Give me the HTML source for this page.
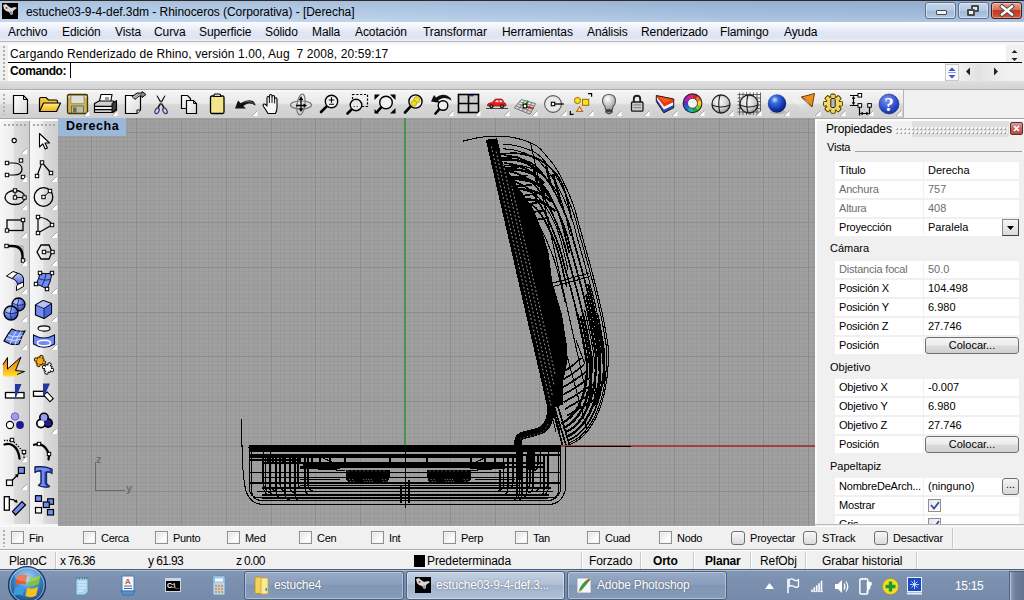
<!DOCTYPE html>
<html><head><meta charset="utf-8"><title>Rhinoceros</title>
<style>
*{box-sizing:border-box;margin:0;padding:0}
html,body{width:1024px;height:600px;overflow:hidden;background:#f0f0f0;font-family:"Liberation Sans","DejaVu Sans",sans-serif;font-size:12px;color:#000}
.abs{position:absolute}
svg{position:absolute;overflow:visible}
#titlebar{left:0;top:0;width:1024px;height:22px;background:linear-gradient(180deg,rgba(0,0,0,.05) 0,rgba(255,255,255,0) 45%,rgba(255,255,255,.2) 100%),linear-gradient(90deg,#b4cce8 0,#b1c9e6 35%,#9fbadb 70%,#99b4d6 100%);border-top:1px solid #2b2b2b}
#title{left:26px;top:5px;font-size:12px;color:#000;white-space:nowrap;letter-spacing:-0.05px}
#menubar{left:0;top:22px;width:1024px;height:20px;background:linear-gradient(#fbfcfe 0,#eef1f9 30%,#e1e6f5 55%,#dfe4f3 85%,#eff1f8 100%);border-bottom:1px solid #b8b8b8}
#menubar span{position:absolute;top:3px;font-size:12px;white-space:nowrap;letter-spacing:-.1px}
#cmdarea{left:0;top:43px;width:1024px;height:47px;background:#f0f0f0}
#hist{left:8px;top:45px;width:998px;height:17px;background:#fff}
#hist span{position:absolute;left:2px;top:2px;font-size:12px;white-space:nowrap;letter-spacing:0.1px}
#cmdline{left:8px;top:62px;width:1014px;height:1px;background:#000}
#cmdbox{left:8px;top:63px;width:937px;height:18px;background:#fff}
#cmdbox b{position:absolute;left:2px;top:1px;font-size:12px;letter-spacing:-0.4px}
#caret{left:70px;top:63px;width:1px;height:15px;background:#000}
.grip{background-image:radial-gradient(circle at 1px 1px,#b2b2b2 0.9px,transparent 1.1px);background-size:4px 4px}
.hgrip{background-image:radial-gradient(circle at 1px 1px,#a8a8a8 0.9px,transparent 1.1px);background-size:4px 4px}
#toolbar{left:0;top:90px;width:904px;height:28px;background:linear-gradient(#fdfdfd 0,#f3f3f3 8%,#e9e9e9 47%,#d8d8d8 53%,#cfcfcf 100%);border-right:1px solid #b5b5b5}
#toolbar svg{top:0;width:28px;height:28px}
#lefttb{left:0;top:118px;width:58px;height:408px;background:#f0f0f0}
.lcol{position:absolute;top:0;height:407px;background:linear-gradient(90deg,#f7f7f7 0,#ececec 46%,#dcdcdc 50%,#cfcfcf 100%)}
#lefttb svg{width:28px;height:28px}
#viewport{left:58px;top:118px;width:757px;height:408px;background:#a0a0a0;overflow:hidden}
#props{left:815px;top:118px;width:209px;height:408px;background:#f0f0f0;overflow:hidden;font-size:11px}
#osnap{left:0;top:526px;width:1024px;height:24px;background:#f0f0f0}
#status{left:0;top:550px;width:1024px;height:20px;background:#f0f0f0}
#taskbar{left:0;top:569px;width:1024px;height:31px;background:linear-gradient(#8297b5 0,#7b90ae 40%,#768baa 100%);border-top:1px solid #515f74}
</style></head><body>
<div id="titlebar" class="abs"></div>
<svg class="abs" style="left:2px;top:3px;width:16px;height:16px" viewBox="0 0 16 16"><rect width="16" height="16" fill="#000"/><path d="M1 2 L4 1 L6 3 L9 5 L13 4 L15 5 L11 8 L11 11 L9 12 L7 9 L4 8 L2 6 Z" fill="#d8d8d8"/><path d="M7 9 L9 12 L11 11 L10 8Z" fill="#9a9a9a"/><circle cx="4.5" cy="5" r="1" fill="#e02020"/></svg>
<div id="title" class="abs">estuche03-9-4-def.3dm - Rhinoceros (Corporativa) - [Derecha]</div>
<!-- window buttons -->
<div class="abs" style="left:925px;top:2px;width:31px;height:17px;border:1px solid #5c708a;border-radius:3px;background:linear-gradient(#c3d6ec 0,#b4cae4 50%,#9fb9d6 52%,#b0c8e2 100%);box-shadow:inset 0 0 0 1px rgba(255,255,255,.45)"></div>
<div class="abs" style="left:936px;top:10px;width:11px;height:5px;border:1px solid #4a4a4a;border-radius:1px;background:#f4f4f4"></div>
<div class="abs" style="left:958px;top:2px;width:31px;height:17px;border:1px solid #5c708a;border-radius:3px;background:linear-gradient(#c3d6ec 0,#b4cae4 50%,#9fb9d6 52%,#b0c8e2 100%);box-shadow:inset 0 0 0 1px rgba(255,255,255,.45)"></div>
<div class="abs" style="left:971px;top:5px;width:8px;height:7px;border:2px solid #4a4a4a;border-radius:1px;background:#dfe8f2"></div>
<div class="abs" style="left:967px;top:9px;width:8px;height:7px;border:2px solid #4a4a4a;border-radius:1px;background:#f2f2f2"></div>
<div class="abs" style="left:991px;top:2px;width:31px;height:17px;border:1px solid #4a1a1a;border-radius:3px;background:linear-gradient(#e4a595 0,#d7705a 45%,#c2391b 50%,#cf5a3a 100%);box-shadow:inset 0 0 0 1px rgba(255,255,255,.35)"></div>
<svg class="abs" style="left:1000px;top:5px;width:14px;height:11px" viewBox="0 0 14 11"><path d="M2 1.5 L12 9.5 M12 1.5 L2 9.5" stroke="#43464c" stroke-width="4.2" stroke-linecap="square"/><path d="M2 1.5 L12 9.5 M12 1.5 L2 9.5" stroke="#fff" stroke-width="2.4" stroke-linecap="square"/></svg>
<div id="menubar" class="abs">
<span style="left:8px">Archivo</span><span style="left:62px">Edición</span><span style="left:115px">Vista</span><span style="left:154px">Curva</span><span style="left:199px">Superficie</span><span style="left:265px">Sólido</span><span style="left:312px">Malla</span><span style="left:355px">Acotación</span><span style="left:423px">Transformar</span><span style="left:502px">Herramientas</span><span style="left:587px">Análisis</span><span style="left:641px">Renderizado</span><span style="left:720px">Flamingo</span><span style="left:784px">Ayuda</span>
</div>
<div id="cmdarea" class="abs"></div>
<div class="abs" style="left:0;top:43px;width:1024px;height:2px;background:#f7f7f7"></div>
<div class="abs" style="left:0;top:81px;width:1024px;height:8px;background:linear-gradient(#dfdfdf,#d3d3d3)"></div>
<div class="abs" style="left:0;top:89px;width:1024px;height:1px;background:#acacac"></div>
<div class="abs grip" style="left:3px;top:46px;width:3px;height:36px"></div>
<div id="hist" class="abs"><span>Cargando Renderizado de Rhino, versión 1.00, Aug&nbsp; 7 2008, 20:59:17</span></div>
<div class="abs" style="left:1006px;top:45px;width:16px;height:17px;background:#f0f0f0"></div>
<svg class="abs" style="left:1010px;top:48px;width:9px;height:14px" viewBox="0 0 9 14"><path d="M1.5 5 L4.5 2 L7.5 5Z M1.5 10 L7.5 10 L4.5 13Z" fill="#222"/></svg>
<div id="cmdline" class="abs"></div>
<div id="cmdbox" class="abs"><b>Comando:</b></div>
<div id="caret" class="abs"></div>
<div class="abs" style="left:945px;top:63px;width:77px;height:18px;background:#f0f0f0"></div>
<div class="abs" style="left:945px;top:64px;width:14px;height:17px;background:#fafafa;border:1px solid #c8c8c8"></div>
<svg class="abs" style="left:948px;top:66px;width:8px;height:14px" viewBox="0 0 8 14"><path d="M0.5 5 L4 1.5 L7.5 5Z M0.5 9 L7.5 9 L4 12.5Z" fill="#3f55c8"/><path d="M0 6.5h8" stroke="#8ea0d8" stroke-width="1"/></svg>
<div class="abs" style="left:960px;top:64px;width:46px;height:17px;background:linear-gradient(90deg,#f0f0f0,#e2e2e2 40%,#f0f0f0)"></div>
<svg class="abs" style="left:964px;top:66px;width:36px;height:11px" viewBox="0 0 36 11"><path d="M6 1.5 L6 9.5 L2 5.5Z M30 1.5 L30 9.5 L34 5.5Z" fill="#222"/></svg>
<div id="toolbar" class="abs">
<div class="abs grip" style="left:3px;top:4px;width:3px;height:21px"></div>
<svg style="left:7px" viewBox="0 0 28 28"><defs><linearGradient id="gpg" x1="0" y1="0" x2="1" y2="1"><stop offset="0" stop-color="#fff"/><stop offset="1" stop-color="#d9d9d9"/></linearGradient></defs><path d="M6.5 5.5 H16.5 L20.5 9.5 V23.5 H6.5 Z" fill="url(#gpg)" stroke="#000" stroke-width="1.2"/><path d="M16.5 5.5 V9.5 H20.5" fill="none" stroke="#000" stroke-width="1"/></svg>
<svg style="left:35px" viewBox="0 0 28 28"><defs><linearGradient id="gfo" x1="0" y1="0" x2="0" y2="1"><stop offset="0" stop-color="#fff0a0"/><stop offset=".5" stop-color="#f9cf4a"/><stop offset="1" stop-color="#eeb21e"/></linearGradient></defs><path d="M4.5 21.5 V9 Q4.5 7.5 6 7.5 H11 L13.5 10 H21 Q22.5 10 22.5 11.5 V13" fill="#f3c331" stroke="#000" stroke-width="1.2"/><path d="M4.5 21.5 L8.5 13 H25.5 L21.5 21.5 Z" fill="url(#gfo)" stroke="#000" stroke-width="1.2" stroke-linejoin="round"/></svg>
<svg style="left:63px" viewBox="0 0 28 28"><rect x="4.5" y="4.5" width="20" height="19" rx="1.5" fill="#c8b35a" stroke="#3c3208" stroke-width="1.3"/><rect x="8" y="5.5" width="13" height="8" fill="#dedede" stroke="#8d8140" stroke-width=".6"/><rect x="8.5" y="16" width="12" height="7" fill="#b9b9b9" stroke="#5e5522" stroke-width=".7"/><rect x="10" y="17.5" width="3.5" height="5" fill="#7d6d25"/><rect x="5.5" y="6" width="1.5" height="1.5" fill="#f5e9a6"/><rect x="22" y="6" width="1.5" height="1.5" fill="#f5e9a6"/><path d="M26.500 20.500 V26 H21 Z" fill="#fff"/><path d="M26.500 20.500 L21 26" stroke="#a2a2a2" stroke-width=".9"/></svg>
<svg style="left:91px" viewBox="0 0 28 28"><path d="M8 13 L10 4.5 H21 L19.5 13 Z" fill="#fff" stroke="#000" stroke-width="1.1"/><path d="M14 7 h4 v3 h-4z" fill="#9a9a9a"/><path d="M3.5 13.5 L8 11 H22 L25.5 13.5 V20 L22 22.5 H3.5 Z" fill="#cfcfcf" stroke="#000" stroke-width="1.2"/><path d="M21 13.5 L25.5 10.5 V19 L21 22.5Z" fill="#3a3a3a" stroke="#000" stroke-width="1"/><path d="M3.5 16.5 H21 M3.5 19.5 H21" stroke="#000" stroke-width="1.4"/><rect x="4" y="17.2" width="16.5" height="1.6" fill="#fff"/><path d="M26.500 20.500 V26 H21 Z" fill="#fff"/><path d="M26.500 20.500 L21 26" stroke="#a2a2a2" stroke-width=".9"/></svg>
<svg style="left:121px" viewBox="0 0 28 28"><path d="M4.5 5.5 H19.5 V20 L16 23.5 H4.5 Z" fill="url(#gpg)" stroke="#000" stroke-width="1.2"/><path d="M16 23.5 V20 H19.5" fill="#fff" stroke="#000" stroke-width="1"/><path d="M11 6.5 L16 3 H21 V1.5 L25 4.5 L21 7.5 V6 H18 L14 9.5Z" fill="#8a8a8a" stroke="#000" stroke-width=".9"/><path d="M12 7.5 L17 4 M14 8 L19 4.5" stroke="#e0e0e0" stroke-width=".7"/></svg>
<svg style="left:147px" viewBox="0 0 28 28"><path d="M9.300 5.500 L10.600 5.800 L17.800 17.500 L16.300 18.300 Z M18.700 5.500 L17.400 5.800 L10.200 17.500 L11.700 18.300 Z" fill="#111"/><ellipse cx="10" cy="20.800" rx="1.900" ry="3" fill="none" stroke="#2c3680" stroke-width="1.200" transform="rotate(28 10 20.800)"/><ellipse cx="18" cy="20.800" rx="1.900" ry="3" fill="none" stroke="#2c3680" stroke-width="1.200" transform="rotate(-28 18 20.800)"/></svg>
<svg style="left:175px" viewBox="0 0 28 28"><path d="M6.5 5.5 H12.5 L15.5 8.5 V18.5 H6.5 Z" fill="url(#gpg)" stroke="#000" stroke-width="1.2"/><path d="M11.5 10.5 H18.5 L21.5 13.5 V23.5 H11.5 Z" fill="url(#gpg)" stroke="#000" stroke-width="1.2"/><path d="M18.5 10.5 V13.5 H21.5" fill="none" stroke="#000" stroke-width=".9"/></svg>
<svg style="left:203px" viewBox="0 0 28 28"><rect x="7.5" y="6" width="13.5" height="17.5" rx="1.5" fill="#f2e58a" stroke="#000" stroke-width="1.3"/><path d="M11 6.5 V5 Q11 4 12 4 H16.5 Q17.5 4 17.5 5 V6.5 Z" fill="#d8d8d8" stroke="#000" stroke-width="1.1"/></svg>
<svg style="left:231px" viewBox="0 0 28 28"><path d="M4 18.500 L7 10.500 L9.800 13.300 Q16 8.500 22 11 Q24.500 12.500 24.500 15.500 Q20 12.800 16.500 13.700 Q14 14.400 12.300 16 L15 18.500 Z" fill="#111"/><path d="M13 12 Q18 10 23.500 13.500" fill="none" stroke="#777" stroke-width=".8"/><path d="M26.500 20.500 V26 H21 Z" fill="#fff"/><path d="M26.500 20.500 L21 26" stroke="#a2a2a2" stroke-width=".9"/></svg>
<svg style="left:258px" viewBox="0 0 28 28"><path d="M10 23.5 Q8 20 5.5 16.5 Q4.5 14.5 6 14 Q7.5 13.8 9 16 V8 Q9 6.5 10.2 6.5 Q11.4 6.5 11.4 8 V6 Q11.4 4.5 12.7 4.5 Q14 4.5 14 6 V7 Q14 5.5 15.3 5.5 Q16.6 5.5 16.6 7 V9 Q16.6 7.8 17.8 7.8 Q19 7.8 19 9.2 V17 Q19 21 17.5 23.5 Z" fill="#f6f6f6" stroke="#000" stroke-width="1.1" stroke-linejoin="round"/><path d="M11.4 8 V13 M14 7 V13 M16.6 9 V13.5" stroke="#000" stroke-width=".9"/></svg>
<svg style="left:287px" viewBox="0 0 28 28"><ellipse cx="14" cy="15" rx="10.5" ry="4" fill="none" stroke="#777" stroke-width="1.2"/><ellipse cx="14" cy="14.5" rx="4" ry="10.5" fill="none" stroke="#777" stroke-width="1.2" transform="rotate(8 14 14.5)"/><path d="M14 8 V20 M9 15.5 H18" stroke="#000" stroke-width="1.3"/><path d="M14 6 L11.8 10 H16.2Z M14 22 L11.8 18.5 H16.2Z M20 15.5 L16.5 13.5 V17.5Z" fill="#000"/></svg>
<svg style="left:315px" viewBox="0 0 28 28"><path d="M12.2 15.8 L6 22" stroke="#000" stroke-width="2.6" stroke-linecap="round"/><circle cx="16.5" cy="11.5" r="6.2" fill="#f2f2f2" stroke="#000" stroke-width="1.4"/><path d="M13.8 10 H19.2 M16.5 7.3 V12.7 M14 14.2 H19" stroke="#000" stroke-width="1.1"/></svg>
<svg style="left:343px" viewBox="0 0 28 28"><rect x="9.5" y="4.5" width="15" height="12" fill="none" stroke="#000" stroke-width="1.2" stroke-dasharray="2.2 1.6"/><path d="M8.9 19.1 L4.5 23.5" stroke="#000" stroke-width="2.6" stroke-linecap="round"/><circle cx="13" cy="15" r="5.8" fill="#e9e9e9" stroke="#000" stroke-width="1.4"/><path d="M10.5 16.5 h1.5 m1.5 0 h1.5" stroke="#555" stroke-width="1"/></svg>
<svg style="left:371px" viewBox="0 0 28 28"><path d="M10.6 16.9 L6 22" stroke="#000" stroke-width="2.6" stroke-linecap="round"/><circle cx="15" cy="12.5" r="6.3" fill="#f2f2f2" stroke="#000" stroke-width="1.4"/><path d="M3.5 4.5 H9 L3.5 10Z M24.5 4.5 H19 L24.5 10Z M3.5 23.5 V19 L8 23.5Z M24.5 23.5 V18 L19 23.5Z" fill="#000"/></svg>
<svg style="left:399px" viewBox="0 0 28 28"><path d="M11.9 16.1 L6 22.5" stroke="#000" stroke-width="2.6" stroke-linecap="round"/><circle cx="16.5" cy="11.5" r="6.6" fill="#ededed" stroke="#000" stroke-width="1.4"/><circle cx="17.8" cy="9.8" r="3.1" fill="#f2dd1e" stroke="#a08c00" stroke-width=".6"/><circle cx="14.8" cy="13.4" r="2.8" fill="#f2dd1e" stroke="#a08c00" stroke-width=".6"/></svg>
<svg style="left:427px" viewBox="0 0 28 28"><path d="M12.6 18.9 L8.5 23.5" stroke="#000" stroke-width="2.6" stroke-linecap="round"/><circle cx="16" cy="15.5" r="4.8" fill="#f0f0f0" stroke="#000" stroke-width="1.4"/><path d="M4 11.5 L7 5 L9 7.5 Q14 3.5 20 5.5 Q23.5 7 24.5 10.5 Q20.5 7.5 16.5 8 Q13 8.6 11.2 10.5 L13.2 13 Z" fill="#111"/><path d="M26.500 20.500 V26 H21 Z" fill="#fff"/><path d="M26.500 20.500 L21 26" stroke="#a2a2a2" stroke-width=".9"/></svg>
<svg style="left:454px" viewBox="0 0 28 28"><rect x="4.5" y="4.5" width="20" height="18" fill="#cdcdcd" stroke="#000" stroke-width="1.6"/><path d="M14.5 4.5 V22.5 M4.5 13.5 H24.5" stroke="#000" stroke-width="1.6"/><rect x="15.5" y="5" width="4" height="1.3" fill="#1a2ea8"/><path d="M26.500 20.500 V26 H21 Z" fill="#fff"/><path d="M26.500 20.500 L21 26" stroke="#a2a2a2" stroke-width=".9"/></svg>
<svg style="left:483px" viewBox="0 0 28 28"><path d="M3 18.500 H25" stroke="#444" stroke-width="1"/><path d="M4.500 16 Q4 13.300 7 13 L9.500 12.500 L11.500 9.800 Q12 9 13.500 9 H18 Q19.300 9 19.800 10 L20.800 12.600 Q23 13 23 14.800 V16 Z" fill="#e81c1c" stroke="#8a0c0c" stroke-width=".7"/><path d="M12 12.300 L13.300 10.200 H15.600 V12.300Z M16.600 10.200 H18.600 L19.500 12.300 H16.600Z" fill="#fbdada"/><circle cx="8.500" cy="16.300" r="2.100" fill="#1a1a1a"/><circle cx="8.500" cy="16.300" r=".8" fill="#bbb"/><circle cx="19" cy="16.300" r="2.100" fill="#1a1a1a"/><circle cx="19" cy="16.300" r=".8" fill="#bbb"/><path d="M26.500 20.500 V26 H21 Z" fill="#fff"/><path d="M26.500 20.500 L21 26" stroke="#a2a2a2" stroke-width=".9"/></svg>
<svg style="left:511px" viewBox="0 0 28 28"><path d="M10.200 9.500 L24.600 13.600 L19 24.200 L3.400 18 Z M12.600 5.800" fill="none" stroke="#6a6a6a" stroke-width=".9"/><path d="M8.500 11.600 L23.200 16.200 M6.800 13.700 L21.800 18.900 M5.100 15.900 L20.400 21.500 M13.800 10.500 L7.300 19.600 M17.400 11.600 L11.200 21.100 M21 12.600 L15.100 22.600" stroke="#6a6a6a" stroke-width=".8"/><path d="M14 16 L17.200 10.800" stroke="#0a9a0a" stroke-width="1.700"/><path d="M14 16 L22.500 18.600" stroke="#d41a1a" stroke-width="1.700"/><rect x="12.200" y="14.200" width="3.600" height="3.600" fill="#fff" stroke="#000" stroke-width="1.100"/><path d="M26.500 20.500 V26 H21 Z" fill="#fff"/><path d="M26.500 20.500 L21 26" stroke="#a2a2a2" stroke-width=".9"/></svg>
<svg style="left:540px" viewBox="0 0 28 28"><circle cx="13" cy="14" r="8.400" fill="#e9e9e9" stroke="#5a5a5a" stroke-width="1.100"/><path d="M14.500 14 H23.800" stroke="#000" stroke-width="1.300"/><rect x="11.300" y="12.300" width="3.400" height="3.400" fill="#fff" stroke="#000" stroke-width="1.100"/><path d="M26.500 20.500 V26 H21 Z" fill="#fff"/><path d="M26.500 20.500 L21 26" stroke="#a2a2a2" stroke-width=".9"/></svg>
<svg style="left:567px" viewBox="0 0 28 28"><path d="M21 3.600 H24.600 V6.800 M3.300 21 V24.300 H6.600" fill="none" stroke="#000" stroke-width="1.200"/><circle cx="10.500" cy="10.500" r="3.100" fill="#fbe11a" stroke="#9a6a00" stroke-width="1"/><rect x="15.500" y="9.300" width="6.200" height="6" fill="#fbe11a" stroke="#9a6a00" stroke-width="1"/><path d="M12.600 16.800 L15.500 21.400 H9.700 Z" fill="#f4f4f4" stroke="#c46a10" stroke-width="1.200"/><path d="M26.500 20.500 V26 H21 Z" fill="#fff"/><path d="M26.500 20.500 L21 26" stroke="#a2a2a2" stroke-width=".9"/></svg>
<svg style="left:595px" viewBox="0 0 28 28"><defs><radialGradient id="gbu" cx=".4" cy=".3" r=".7"><stop offset="0" stop-color="#fff"/><stop offset="1" stop-color="#9c9c9c"/></radialGradient></defs><path d="M14 4.5 Q20.5 4.5 20.5 11 Q20.5 14 18 16.5 L17.5 19.5 H10.5 L10 16.5 Q7.5 14 7.5 11 Q7.5 4.5 14 4.5Z" fill="url(#gbu)" stroke="#555" stroke-width="1.1"/><path d="M10.8 20.5 H17.2 V22.5 Q14 25.5 10.8 22.5Z" fill="#8a8a8a" stroke="#333" stroke-width=".9"/><path d="M10.8 21.5 H17.2" stroke="#333" stroke-width=".8"/><path d="M26.500 20.500 V26 H21 Z" fill="#fff"/><path d="M26.500 20.500 L21 26" stroke="#a2a2a2" stroke-width=".9"/></svg>
<svg style="left:623px" viewBox="0 0 28 28"><path d="M10.800 12 V9 Q10.800 5.800 14 5.800 Q17.200 5.800 17.200 9 V12" fill="none" stroke="#222" stroke-width="1.900"/><rect x="8.500" y="12" width="11.500" height="9.200" rx="1" fill="#cbcbcb" stroke="#1a1a1a" stroke-width="1.300"/><path d="M10.500 14.800 H18 M10.500 17.600 H18" stroke="#8a8a8a" stroke-width="1.200"/><path d="M26.500 20.500 V26 H21 Z" fill="#fff"/><path d="M26.500 20.500 L21 26" stroke="#a2a2a2" stroke-width=".9"/></svg>
<svg style="left:651px" viewBox="0 0 28 28"><path d="M5.300 11.500 L12.800 22.800 L22.700 17.800 V14.800 L13 19.600 L5.300 8.500Z" fill="#2446c8"/><path d="M5.300 8.500 L13 19.600 L22.700 14.800 V12 L13.200 16.600 L5.300 6Z" fill="#f6f6f6"/><path d="M5.300 5.500 L22.700 9 V12 L13.200 16.600 L5.300 6.500Z" fill="#e8380c"/><path d="M5.300 5.500 L22.700 9 L13.800 13 L5.300 5.500Z" fill="#f9571c"/><path d="M5.300 5.500 L22.700 9 V17.800 L12.800 22.800 L5.300 11.500 Z" fill="none" stroke="#2a1a10" stroke-width="1" stroke-linejoin="round"/><path d="M26.500 20.500 V26 H21 Z" fill="#fff"/><path d="M26.500 20.500 L21 26" stroke="#a2a2a2" stroke-width=".9"/></svg>
<svg style="left:678px" viewBox="0 0 28 28"><path d="M14.50 3.90 A9.4 9.4 0 0 1 20.40 5.98 L17.64 9.41 A5 5 0 0 0 14.50 8.30Z" fill="#e8182c"/><path d="M20.03 5.70 A9.4 9.4 0 0 1 23.57 10.85 L19.33 11.99 A5 5 0 0 0 17.44 9.25Z" fill="#f0701a"/><path d="M23.44 10.40 A9.4 9.4 0 0 1 23.28 16.65 L19.17 15.08 A5 5 0 0 0 19.26 11.75Z" fill="#f4d21a"/><path d="M23.44 16.20 A9.4 9.4 0 0 1 19.64 21.17 L17.23 17.49 A5 5 0 0 0 19.26 14.85Z" fill="#7cc82a"/><path d="M20.03 20.90 A9.4 9.4 0 0 1 14.03 22.69 L14.25 18.29 A5 5 0 0 0 17.44 17.35Z" fill="#18a84a"/><path d="M14.50 22.70 A9.4 9.4 0 0 1 8.60 20.62 L11.36 17.19 A5 5 0 0 0 14.50 18.30Z" fill="#18b4b4"/><path d="M8.97 20.90 A9.4 9.4 0 0 1 5.43 15.75 L9.67 14.61 A5 5 0 0 0 11.56 17.35Z" fill="#1a6ae0"/><path d="M5.56 16.20 A9.4 9.4 0 0 1 5.72 9.95 L9.83 11.52 A5 5 0 0 0 9.74 14.85Z" fill="#5a2ad0"/><path d="M5.56 10.40 A9.4 9.4 0 0 1 9.36 5.43 L11.77 9.11 A5 5 0 0 0 9.74 11.75Z" fill="#b41ac0"/><path d="M8.97 5.70 A9.4 9.4 0 0 1 14.97 3.91 L14.75 8.31 A5 5 0 0 0 11.56 9.25Z" fill="#e81a8a"/><circle cx="14.500" cy="13.300" r="9.400" fill="none" stroke="#222" stroke-width="1.100"/><circle cx="14.500" cy="13.300" r="5" fill="#f4f4f4" stroke="#222" stroke-width=".8"/><path d="M26.500 20.500 V26 H21 Z" fill="#fff"/><path d="M26.500 20.500 L21 26" stroke="#a2a2a2" stroke-width=".9"/></svg>
<svg style="left:707px" viewBox="0 0 28 28"><defs><radialGradient id="gsp" cx=".4" cy=".35" r=".75"><stop offset="0" stop-color="#fff"/><stop offset=".6" stop-color="#cfcfcf"/><stop offset="1" stop-color="#7d7d7d"/></radialGradient></defs><circle cx="14" cy="14" r="9" fill="url(#gsp)" stroke="#222" stroke-width="1.3"/><path d="M5 15 Q14 19 23 15 M13 5 Q10.5 14 13 23" fill="none" stroke="#222" stroke-width="1.2"/><path d="M26.500 20.500 V26 H21 Z" fill="#fff"/><path d="M26.500 20.500 L21 26" stroke="#a2a2a2" stroke-width=".9"/></svg>
<svg style="left:735px" viewBox="0 0 28 28"><path d="M2.500 4.500H26M2.500 8H26M2.500 11.500H26M2.500 15H26M2.500 18.500H26M2.500 22H26M4.500 2.500V25M8 2.500V25M11.500 2.500V25M15 2.500V25M18.500 2.500V25M22 2.500V25M25.500 2.500V25" stroke="#4a4a4a" stroke-width=".8"/><circle cx="14" cy="14" r="9" fill="url(#gsp)" stroke="#222" stroke-width="1.3"/><path d="M5 15 Q14 19 23 15 M13 5 Q10.5 14 13 23" fill="none" stroke="#222" stroke-width="1.2"/><path d="M26.500 20.500 V26 H21 Z" fill="#fff"/><path d="M26.500 20.500 L21 26" stroke="#a2a2a2" stroke-width=".9"/></svg>
<svg style="left:763px" viewBox="0 0 28 28"><defs><radialGradient id="gbb" cx=".38" cy=".3" r=".8"><stop offset="0" stop-color="#cfe0ff"/><stop offset=".25" stop-color="#3a6ee0"/><stop offset=".7" stop-color="#0e2ea0"/><stop offset="1" stop-color="#051458"/></radialGradient></defs><ellipse cx="15" cy="22" rx="8" ry="2.2" fill="#b5b5b5"/><circle cx="14" cy="13.5" r="9.2" fill="url(#gbb)"/><path d="M26.500 20.500 V26 H21 Z" fill="#fff"/><path d="M26.500 20.500 L21 26" stroke="#a2a2a2" stroke-width=".9"/></svg>
<svg style="left:794px" viewBox="0 0 28 28"><defs><linearGradient id="gco" x1="0" y1="0" x2="1" y2="1"><stop offset="0" stop-color="#fff"/><stop offset="1" stop-color="#d0d0d0" stop-opacity="0"/></linearGradient></defs><path d="M-3 9 L12 24 L20 12Z" fill="url(#gco)" opacity=".7"/><path d="M7.5 7 L20.5 3.5 L18 17 Z" fill="#f09018" stroke="#5a3000" stroke-width=".9" stroke-linejoin="round"/><path d="M7.500 7 L18 17 L14 11 Z" fill="#fbe8c8" stroke="#5a3000" stroke-width=".6"/><path d="M26.500 20.500 V26 H21 Z" fill="#fff"/><path d="M26.500 20.500 L21 26" stroke="#a2a2a2" stroke-width=".9"/></svg>
<svg style="left:819px" viewBox="0 0 28 28"><rect x="11.8" y="4.200" width="4.400" height="19" rx="1" fill="#f2d662" stroke="#5a4500" stroke-width="1" transform="rotate(0 14 13.700)"/><rect x="11.8" y="4.200" width="4.400" height="19" rx="1" fill="#f2d662" stroke="#5a4500" stroke-width="1" transform="rotate(45 14 13.700)"/><rect x="11.8" y="4.200" width="4.400" height="19" rx="1" fill="#f2d662" stroke="#5a4500" stroke-width="1" transform="rotate(90 14 13.700)"/><rect x="11.8" y="4.200" width="4.400" height="19" rx="1" fill="#f2d662" stroke="#5a4500" stroke-width="1" transform="rotate(135 14 13.700)"/><rect x="11.8" y="4.200" width="4.400" height="19" rx="1" fill="#f2d662" stroke="#5a4500" stroke-width="1" transform="rotate(180 14 13.700)"/><rect x="11.8" y="4.200" width="4.400" height="19" rx="1" fill="#f2d662" stroke="#5a4500" stroke-width="1" transform="rotate(225 14 13.700)"/><rect x="11.8" y="4.200" width="4.400" height="19" rx="1" fill="#f2d662" stroke="#5a4500" stroke-width="1" transform="rotate(270 14 13.700)"/><rect x="11.8" y="4.200" width="4.400" height="19" rx="1" fill="#f2d662" stroke="#5a4500" stroke-width="1" transform="rotate(315 14 13.700)"/><circle cx="14" cy="13.700" r="6.800" fill="#f2d662" stroke="#5a4500" stroke-width="1"/><rect x="12.500" y="5" width="3" height="17.400" fill="#f2d662" transform="rotate(0 14 13.700)"/><rect x="12.500" y="5" width="3" height="17.400" fill="#f2d662" transform="rotate(45 14 13.700)"/><rect x="12.500" y="5" width="3" height="17.400" fill="#f2d662" transform="rotate(90 14 13.700)"/><rect x="12.500" y="5" width="3" height="17.400" fill="#f2d662" transform="rotate(135 14 13.700)"/><rect x="12.500" y="5" width="3" height="17.400" fill="#f2d662" transform="rotate(180 14 13.700)"/><rect x="12.500" y="5" width="3" height="17.400" fill="#f2d662" transform="rotate(225 14 13.700)"/><rect x="12.500" y="5" width="3" height="17.400" fill="#f2d662" transform="rotate(270 14 13.700)"/><rect x="12.500" y="5" width="3" height="17.400" fill="#f2d662" transform="rotate(315 14 13.700)"/><circle cx="14" cy="13.700" r="6.200" fill="#f2d662"/><rect x="11.800" y="8.500" width="4.400" height="9" rx="1" fill="#b9b9b9" stroke="#222" stroke-width="1"/><path d="M26.500 20.500 V26 H21 Z" fill="#fff"/><path d="M26.500 20.500 L21 26" stroke="#a2a2a2" stroke-width=".9"/></svg>
<svg style="left:847px" viewBox="0 0 28 28"><path d="M3 5.500 H13 M3 15.500 H13 M12.5 16 V25.500 M22.5 16 V25.500" stroke="#000" stroke-width="1.2"/><path d="M6.500 7 V14 M14 23.500 H21" stroke="#000" stroke-width="1.1"/><path d="M6.500 5.800 L4.8 8.800 H8.2Z M6.500 15.200 L4.800 12.200 H8.200Z M12.800 23.500 L15.800 21.800 V25.200Z M22.200 23.500 L19.200 21.800 V25.200Z" fill="#000"/><rect x="11" y="3.500" width="3.6" height="3.600" fill="#fff" stroke="#000" stroke-width="1"/><rect x="11" y="13.600" width="3.600" height="3.600" fill="#fff" stroke="#000" stroke-width="1"/><rect x="20.700" y="13.600" width="3.600" height="3.600" fill="#fff" stroke="#000" stroke-width="1"/><path d="M26.500 20.500 V26 H21 Z" fill="#fff"/><path d="M26.500 20.500 L21 26" stroke="#a2a2a2" stroke-width=".9"/></svg>
<svg style="left:875px" viewBox="0 0 28 28"><defs><radialGradient id="ghe" cx=".4" cy=".3" r=".8"><stop offset="0" stop-color="#7e98f0"/><stop offset=".6" stop-color="#2c4cd0"/><stop offset="1" stop-color="#14288a"/></radialGradient></defs><circle cx="14" cy="14" r="10" fill="url(#ghe)" stroke="#1a2a7a" stroke-width=".6"/><text x="14" y="20.500" text-anchor="middle" font-family="Liberation Serif,serif" font-weight="bold" font-size="19" fill="#fff">?</text><path d="M26.500 20.500 V26 H21 Z" fill="#fff"/><path d="M26.500 20.500 L21 26" stroke="#a2a2a2" stroke-width=".9"/></svg>
</div>
<div id="lefttb" class="abs">
<div class="lcol" style="left:0;width:29px"></div><div class="lcol" style="left:30px;width:28px"></div>
<div class="abs" style="left:29px;top:0;width:1px;height:407px;background:#9c9c9c"></div>
<div class="abs" style="left:0;top:0;width:58px;height:1px;background:#a6a6a6"></div><div class="abs" style="left:0;top:1px;width:58px;height:2px;background:#fcfcfc"></div>
<div class="abs hgrip" style="left:4px;top:6px;width:23px;height:3px"></div><div class="abs hgrip" style="left:33px;top:6px;width:23px;height:3px"></div>
<svg style="left:0;top:9px" viewBox="0 0 28 28"><circle cx="14.2" cy="13.5" r="2.1" fill="#fff" stroke="#000" stroke-width="1.1"/><path d="M27 21 V27 H21 Z" fill="#fff"/><path d="M27 21 L21 27" stroke="#a8a8a8" stroke-width=".9"/></svg>
<svg style="left:30px;top:9px" viewBox="0 0 28 28"><path d="M9.5 6.5 V20 L12.8 16.8 L15.2 22 L17.4 21 L15 16 H19.5 Z" fill="#fff" stroke="#000" stroke-width="1.1" stroke-linejoin="round"/></svg>
<svg style="left:0;top:37px" viewBox="0 0 28 28"><path d="M7 8 H14 Q22 8.500 22 14 Q22 20 14 20 H7" fill="none" stroke="#000" stroke-width="1.2"/><rect x="5.3" y="6.3" width="3.4" height="3.4" fill="#fff" stroke="#000" stroke-width="1"/><rect x="19.3" y="3.8" width="3.4" height="3.4" fill="#fff" stroke="#000" stroke-width="1"/><rect x="5.3" y="18.3" width="3.4" height="3.4" fill="#fff" stroke="#000" stroke-width="1"/><rect x="21.3" y="20.3" width="3.4" height="3.4" fill="#fff" stroke="#000" stroke-width="1"/><path d="M27 21 V27 H21 Z" fill="#fff"/><path d="M27 21 L21 27" stroke="#a8a8a8" stroke-width=".9"/></svg>
<svg style="left:30px;top:37px" viewBox="0 0 28 28"><path d="M7 21 L12 7.500 L21 18" fill="none" stroke="#000" stroke-width="1.2"/><rect x="5.3" y="19.3" width="3.4" height="3.4" fill="#fff" stroke="#000" stroke-width="1"/><rect x="10.3" y="5.8" width="3.4" height="3.4" fill="#fff" stroke="#000" stroke-width="1"/><rect x="19.3" y="16.3" width="3.4" height="3.4" fill="#fff" stroke="#000" stroke-width="1"/><path d="M27 21 V27 H21 Z" fill="#fff"/><path d="M27 21 L21 27" stroke="#a8a8a8" stroke-width=".9"/></svg>
<svg style="left:0;top:65px" viewBox="0 0 28 28"><ellipse cx="15" cy="14.5" rx="10" ry="7" fill="none" stroke="#000" stroke-width="1.3"/><path d="M15 7.500 V14.500 H24.500" fill="none" stroke="#000" stroke-width="1"/><rect x="13.3" y="5.8" width="3.4" height="3.4" fill="#fff" stroke="#000" stroke-width="1"/><rect x="13.3" y="12.8" width="3.4" height="3.4" fill="#fff" stroke="#000" stroke-width="1"/><rect x="22.8" y="12.8" width="3.4" height="3.4" fill="#fff" stroke="#000" stroke-width="1"/><path d="M27 21 V27 H21 Z" fill="#fff"/><path d="M27 21 L21 27" stroke="#a8a8a8" stroke-width=".9"/></svg>
<svg style="left:30px;top:65px" viewBox="0 0 28 28"><circle cx="13.5" cy="14" r="9.300" fill="none" stroke="#000" stroke-width="1.300"/><path d="M13.500 14 L20 8" stroke="#000" stroke-width="1"/><rect x="11.8" y="12.3" width="3.4" height="3.4" fill="#fff" stroke="#000" stroke-width="1"/><rect x="18.3" y="6.3" width="3.4" height="3.4" fill="#fff" stroke="#000" stroke-width="1"/><path d="M27 21 V27 H21 Z" fill="#fff"/><path d="M27 21 L21 27" stroke="#a8a8a8" stroke-width=".9"/></svg>
<svg style="left:0;top:93px" viewBox="0 0 28 28"><rect x="7" y="9" width="16" height="10.500" fill="none" stroke="#000" stroke-width="1.300"/><rect x="21.3" y="7.3" width="3.4" height="3.4" fill="#fff" stroke="#000" stroke-width="1"/><rect x="5.3" y="17.8" width="3.4" height="3.4" fill="#fff" stroke="#000" stroke-width="1"/><path d="M27 21 V27 H21 Z" fill="#fff"/><path d="M27 21 L21 27" stroke="#a8a8a8" stroke-width=".9"/></svg>
<svg style="left:30px;top:93px" viewBox="0 0 28 28"><path d="M8 6 V22 M8 6 Q19 7 22 14 L8 22" fill="none" stroke="#000" stroke-width="1.200"/><rect x="6.3" y="4.3" width="3.4" height="3.4" fill="#fff" stroke="#000" stroke-width="1"/><rect x="20.3" y="12.3" width="3.4" height="3.4" fill="#fff" stroke="#000" stroke-width="1"/><rect x="6.3" y="20.3" width="3.4" height="3.4" fill="#fff" stroke="#000" stroke-width="1"/><path d="M27 21 V27 H21 Z" fill="#fff"/><path d="M27 21 L21 27" stroke="#a8a8a8" stroke-width=".9"/></svg>
<svg style="left:0;top:121px" viewBox="0 0 28 28"><path d="M12 7 H23 V16" fill="none" stroke="#9a9a9a" stroke-width="1"/><path d="M7 7 H12 Q22.500 7 22.500 17 V21" fill="none" stroke="#000" stroke-width="2.400"/><rect x="4.8" y="5.3" width="3.4" height="3.4" fill="#fff" stroke="#000" stroke-width="1"/><rect x="21.3" y="19.8" width="3.4" height="3.4" fill="#fff" stroke="#000" stroke-width="1"/><path d="M27 21 V27 H21 Z" fill="#fff"/><path d="M27 21 L21 27" stroke="#a8a8a8" stroke-width=".9"/></svg>
<svg style="left:30px;top:121px" viewBox="0 0 28 28"><path d="M7 13 L11 6 H19 L22 13 L19 20 H11 Z" fill="none" stroke="#000" stroke-width="1.300"/><path d="M14 13 H22" stroke="#000" stroke-width="1"/><rect x="12.3" y="11.3" width="3.4" height="3.4" fill="#fff" stroke="#000" stroke-width="1"/><rect x="20.8" y="11.3" width="3.4" height="3.4" fill="#fff" stroke="#000" stroke-width="1"/><path d="M27 21 V27 H21 Z" fill="#fff"/><path d="M27 21 L21 27" stroke="#a8a8a8" stroke-width=".9"/></svg>
<svg style="left:0;top:149px" viewBox="0 0 28 28"><defs><linearGradient id="gsf" x1="0" y1="0" x2="0" y2="1"><stop offset="0" stop-color="#b8c6fb"/><stop offset="1" stop-color="#4a68e0"/></linearGradient></defs><path d="M12 11.500 L17.500 6 Q22.500 7 23.500 11 V15 L17.500 17.500 Q17 13 12 11.500Z" fill="url(#gsf)" stroke="#000" stroke-width="1" stroke-linejoin="round"/><path d="M6.500 9 L13 4.500 L17.500 6 L12 11.500 Z" fill="#fff" stroke="#000" stroke-width="1" stroke-linejoin="round"/><path d="M17.500 17.500 L23.500 15 V19.500 L16.500 23.500 V19.500 Z" fill="#fff" stroke="#000" stroke-width="1" stroke-linejoin="round"/><path d="M27 21 V27 H21 Z" fill="#fff"/><path d="M27 21 L21 27" stroke="#a8a8a8" stroke-width=".9"/></svg>
<svg style="left:30px;top:149px" viewBox="0 0 28 28"><path d="M10 6 Q16 7.500 22 6 Q21 14 17 22 Q11 18.500 6 17 Q9 12 10 6Z" fill="#6f8cf0" stroke="#000" stroke-width="1"/><path d="M16 7 Q15 14 11.500 19.500 M8.500 11.500 Q14 14.500 20.500 12.500" fill="none" stroke="#1a2a80" stroke-width="1"/><rect x="8.3" y="4.3" width="3.4" height="3.4" fill="#fff" stroke="#000" stroke-width="1"/><rect x="20.3" y="4.3" width="3.4" height="3.4" fill="#fff" stroke="#000" stroke-width="1"/><rect x="15.3" y="20.3" width="3.4" height="3.4" fill="#fff" stroke="#000" stroke-width="1"/><rect x="4.3" y="15.3" width="3.4" height="3.4" fill="#fff" stroke="#000" stroke-width="1"/><path d="M27 21 V27 H21 Z" fill="#fff"/><path d="M27 21 L21 27" stroke="#a8a8a8" stroke-width=".9"/></svg>
<svg style="left:0;top:177px" viewBox="0 0 28 28"><defs><radialGradient id="gls" cx=".35" cy=".3" r=".8"><stop offset="0" stop-color="#c4d0ff"/><stop offset=".5" stop-color="#6482ec"/><stop offset="1" stop-color="#2438a8"/></radialGradient></defs><circle cx="18.500" cy="9.500" r="6.500" fill="url(#gls)" stroke="#000" stroke-width="1.300"/><path d="M12.500 8 Q18 12 24.500 9 M19 3.500 Q16 10 18.500 16" fill="none" stroke="#0a1040" stroke-width=".8"/><circle cx="11" cy="18" r="7" fill="url(#gls)" stroke="#000" stroke-width="1.300"/><path d="M4.500 16.500 Q10 20.500 17.800 17 M12 11 Q9 17.500 11.500 25" fill="none" stroke="#0a1040" stroke-width=".8"/><path d="M27 21 V27 H21 Z" fill="#fff"/><path d="M27 21 L21 27" stroke="#a8a8a8" stroke-width=".9"/></svg>
<svg style="left:30px;top:177px" viewBox="0 0 28 28"><path d="M5.500 10 L13 5.500 L21.500 8.500 V18.500 L14 23.500 L5.500 20 Z" fill="#6f8cf0" stroke="#000" stroke-width="1.200" stroke-linejoin="round"/><path d="M5.500 10 L13 5.500 L21.500 8.500 L14 13.500 Z" fill="#b4c0fa" stroke="#000" stroke-width=".7"/><path d="M14 13.500 V23.500 L21.500 18.500 V8.500Z" fill="#4a66dc" stroke="#000" stroke-width=".7"/><path d="M27 21 V27 H21 Z" fill="#fff"/><path d="M27 21 L21 27" stroke="#a8a8a8" stroke-width=".9"/></svg>
<svg style="left:0;top:205px" viewBox="0 0 28 28"><path d="M4 18 Q9 9 12 6 Q17 9 25 8 Q21 14 19 21 Q12 23 4 18Z" fill="#6f8cf0" stroke="#000" stroke-width="1.100"/><path d="M8 12 Q14 15 22.500 12.500 M6 15.500 Q13 19 21 16.500 M16.500 7.800 Q12 14 10 21 M21 8.300 Q17 14 14.800 22" fill="none" stroke="#dfe5ff" stroke-width=".9"/><path d="M27 21 V27 H21 Z" fill="#fff"/><path d="M27 21 L21 27" stroke="#a8a8a8" stroke-width=".9"/></svg>
<svg style="left:30px;top:205px" viewBox="0 0 28 28"><ellipse cx="14" cy="5.500" rx="6" ry="2.600" fill="#f4f4f4" stroke="#000" stroke-width="1.100"/><path d="M3.500 12 Q14 18 24.500 12 V21 Q14 27.500 3.500 21Z" fill="#6f8cf0" stroke="#0a1040" stroke-width="1.100"/><ellipse cx="14" cy="20" rx="6.500" ry="2.800" fill="none" stroke="#fff" stroke-width="1.600"/><path d="M27 21 V27 H21 Z" fill="#fff"/><path d="M27 21 L21 27" stroke="#a8a8a8" stroke-width=".9"/></svg>
<svg style="left:0;top:233px" viewBox="0 0 28 28"><defs><linearGradient id="gex" x1="0" y1="0" x2="0" y2="1"><stop offset="0" stop-color="#ee7a10"/><stop offset=".55" stop-color="#f9a818"/><stop offset="1" stop-color="#ffe030"/></linearGradient></defs><path d="M3 25.500 V13.500 L7.500 6.500 V18 L21 6 L15.500 19.500 L24.500 20.500 L17 23.500 L18.500 25.500 Z" fill="url(#gex)"/><path d="M3 13.500 L7.500 6.500 V18 L21 6 L15.500 19.500 L24.500 20.500 L17 23.500" fill="none" stroke="#000" stroke-width="1" stroke-linejoin="miter"/></svg>
<svg style="left:30px;top:233px" viewBox="0 0 28 28"><g transform="translate(10 10) rotate(20)"><path d="M-3.200 -3.200 H-1.200 Q-2.600 -5.800 0 -5.800 Q2.600 -5.800 1.200 -3.200 H3.200 V-1.200 Q5.800 -2.600 5.800 0 Q5.800 2.600 3.200 1.200 V3.200 H1.200 Q2.600 5.800 0 5.800 Q-2.600 5.800 -1.200 3.200 H-3.200 V1.200 Q-5.800 2.600 -5.800 0 Q-5.800 -2.600 -3.200 -1.200Z" fill="#f7a916" stroke="#3a2a00" stroke-width="1" stroke-linejoin="round"/></g><g transform="translate(18 17.5) rotate(20)"><path d="M-3.200 -3.200 H-1.200 Q-2.600 -5.800 0 -5.800 Q2.600 -5.800 1.200 -3.200 H3.200 V-1.200 Q5.800 -2.600 5.800 0 Q5.800 2.600 3.200 1.200 V3.200 H1.200 Q2.600 5.800 0 5.800 Q-2.600 5.800 -1.200 3.200 H-3.200 V1.200 Q-5.800 2.600 -5.800 0 Q-5.800 -2.600 -3.200 -1.200Z" fill="#fdfdfd" stroke="#111" stroke-width="1" stroke-linejoin="round"/></g></svg>
<svg style="left:0;top:261px" viewBox="0 0 28 28"><rect x="5.500" y="13.500" width="18.500" height="5.500" fill="#fff" stroke="#000" stroke-width="1.300"/><path d="M15 5 H21.500 L16 18.500 H15 Z" fill="#2438a0"/></svg>
<svg style="left:30px;top:261px" viewBox="0 0 28 28"><rect x="14" y="16" width="9" height="4.600" fill="#fff" stroke="#000" stroke-width="1.100" transform="rotate(47 14 16) translate(0 -4.300)"/><rect x="3.500" y="12.300" width="10.500" height="5" fill="#fff" stroke="#000" stroke-width="1.300"/><path d="M13 4.500 H20 L14.500 16.500 H13 Z" fill="#2438a0"/></svg>
<svg style="left:0;top:289px" viewBox="0 0 28 28"><circle cx="15" cy="9.500" r="3.800" fill="#9c9ef6" stroke="#3a3a8a" stroke-width=".6"/><circle cx="10" cy="18" r="3.600" fill="#fff" stroke="#000" stroke-width="1.100"/><circle cx="20" cy="18" r="3.900" fill="#1c1c8e"/></svg>
<svg style="left:30px;top:289px" viewBox="0 0 28 28"><circle cx="14" cy="10.500" r="5" fill="#000"/><circle cx="11" cy="16.500" r="5" fill="#000"/><circle cx="18" cy="16" r="5" fill="#000"/><circle cx="18" cy="16" r="3.300" fill="#1c1c8e"/><circle cx="11" cy="16.500" r="3.300" fill="#fff"/><circle cx="14" cy="10.500" r="3.400" fill="#9c9ef6"/><path d="M27 21 V27 H21 Z" fill="#fff"/><path d="M27 21 L21 27" stroke="#a8a8a8" stroke-width=".9"/></svg>
<svg style="left:0;top:317px" viewBox="0 0 28 28"><path d="M4 5.500 H10" stroke="#000" stroke-width="1.300" stroke-dasharray="1.300 1.300"/><path d="M14 7 L22.500 16" stroke="#000" stroke-width="1.300" stroke-dasharray="1.300 1.500"/><path d="M24 19 V24" stroke="#000" stroke-width="1.300" stroke-dasharray="1.300 1.300"/><path d="M4.500 9.500 Q9 8 13 10.500 Q18.500 14 19.500 23.500" fill="none" stroke="#000" stroke-width="2.300" stroke-linecap="round"/><rect x="10.3" y="3.3" width="3.4" height="3.4" fill="#fff" stroke="#000" stroke-width="1"/><rect x="22.3" y="15.3" width="3.4" height="3.4" fill="#fff" stroke="#000" stroke-width="1"/><path d="M27 21 V27 H21 Z" fill="#fff"/><path d="M27 21 L21 27" stroke="#a8a8a8" stroke-width=".9"/></svg>
<svg style="left:30px;top:317px" viewBox="0 0 28 28"><path d="M4 9.800 Q9.500 8 13.500 11 Q18 14.500 19 21 L18.500 24.500" fill="none" stroke="#000" stroke-width="2.200" stroke-linecap="round"/><rect x="7.3" y="7.3" width="3.4" height="3.4" fill="#fff" stroke="#000" stroke-width="1"/><rect x="17.3" y="17.3" width="3.4" height="3.4" fill="#fff" stroke="#000" stroke-width="1"/></svg>
<svg style="left:0;top:345px" viewBox="0 0 28 28"><path d="M12 17.500 L17.500 12" stroke="#000" stroke-width="1.200"/><path d="M18.800 10.700 L14.800 11.800 L17.700 14.700Z" fill="#000"/><rect x="6.500" y="17" width="6" height="5.500" fill="#fafafa" stroke="#000" stroke-width="1.200"/><rect x="18.400" y="4.400" width="6" height="6" fill="#6f8cf0" stroke="#000" stroke-width="1.200"/><path d="M27 21 V27 H21 Z" fill="#fff"/><path d="M27 21 L21 27" stroke="#a8a8a8" stroke-width=".9"/></svg>
<svg style="left:30px;top:345px" viewBox="0 0 28 28"><path d="M5 4 Q13 2.500 22 6 V10.500 L19.500 9 H16.500 V20.500 L19.500 23.500 Q14 25 8.500 22.500 L11 20 V8 H8 L5 9.500 Z" fill="#6f8cf0" stroke="#0a1450" stroke-width="1.300" stroke-linejoin="round"/><path d="M16.500 9 V20.500 L19.500 23.500 L17.500 24 L14.500 21 V8.500Z" fill="#2438a0"/><path d="M22 6 V10.500 L19.500 9 V6.500Z" fill="#2438a0"/></svg>
<svg style="left:0;top:373px" viewBox="0 0 28 28"><rect x="4.300" y="5.700" width="5" height="13.500" fill="#fff" stroke="#000" stroke-width="1.300"/><path d="M9.500 8.500 Q14 8 16 10.500" fill="none" stroke="#000" stroke-width="1.100"/><path d="M17.500 12 L13.800 10.800 L16.800 8.500Z" fill="#000"/><path d="M12.500 20.500 L22 10.500 L25.500 14 L15.500 24 Z" fill="#6f8cf0" stroke="#000" stroke-width="1.200"/></svg>
<svg style="left:30px;top:373px" viewBox="0 0 28 28"><rect x="5.500" y="4.700" width="6" height="5.700" fill="#6f8cf0" stroke="#000" stroke-width="1.200"/><rect x="17.700" y="7.800" width="5.800" height="5.500" fill="#6f8cf0" stroke="#000" stroke-width="1.200"/><rect x="13.300" y="11" width="6" height="5.500" fill="#6f8cf0" stroke="#000" stroke-width="1.200"/><rect x="5.500" y="16.500" width="6" height="5.500" fill="#fafafa" stroke="#000" stroke-width="1.200"/><rect x="17.500" y="18.500" width="6" height="5.500" fill="#6f8cf0" stroke="#000" stroke-width="1.200"/></svg>
<div class="abs" style="left:0;top:406px;width:58px;height:2px;background:#f6f6f6"></div>
</div>
<div id="viewport" class="abs">
<svg style="left:0;top:0;width:757px;height:408px" viewBox="58 118 757 408">
<path d="M60.5 118V526M65.5 118V526M69.5 118V526M73.5 118V526M78.5 118V526M82.5 118V526M87.5 118V526M96.5 118V526M100.5 118V526M105.5 118V526M109.5 118V526M114.5 118V526M118.5 118V526M123.5 118V526M127.5 118V526M132.5 118V526M141.5 118V526M145.5 118V526M150.5 118V526M154.5 118V526M159.5 118V526M163.5 118V526M168.5 118V526M172.5 118V526M177.5 118V526M185.5 118V526M190.5 118V526M194.5 118V526M199.5 118V526M203.5 118V526M208.5 118V526M212.5 118V526M217.5 118V526M221.5 118V526M230.5 118V526M235.5 118V526M239.5 118V526M244.5 118V526M248.5 118V526M253.5 118V526M257.5 118V526M262.5 118V526M266.5 118V526M275.5 118V526M280.5 118V526M284.5 118V526M289.5 118V526M293.5 118V526M297.5 118V526M302.5 118V526M306.5 118V526M311.5 118V526M320.5 118V526M324.5 118V526M329.5 118V526M333.5 118V526M338.5 118V526M342.5 118V526M347.5 118V526M351.5 118V526M356.5 118V526M365.5 118V526M369.5 118V526M374.5 118V526M378.5 118V526M383.5 118V526M387.5 118V526M392.5 118V526M396.5 118V526M401.5 118V526M409.5 118V526M414.5 118V526M418.5 118V526M423.5 118V526M427.5 118V526M432.5 118V526M436.5 118V526M441.5 118V526M445.5 118V526M454.5 118V526M459.5 118V526M463.5 118V526M468.5 118V526M472.5 118V526M477.5 118V526M481.5 118V526M486.5 118V526M490.5 118V526M499.5 118V526M504.5 118V526M508.5 118V526M513.5 118V526M517.5 118V526M521.5 118V526M526.5 118V526M530.5 118V526M535.5 118V526M544.5 118V526M548.5 118V526M553.5 118V526M557.5 118V526M562.5 118V526M566.5 118V526M571.5 118V526M575.5 118V526M580.5 118V526M589.5 118V526M593.5 118V526M598.5 118V526M602.5 118V526M607.5 118V526M611.5 118V526M616.5 118V526M620.5 118V526M625.5 118V526M633.5 118V526M638.5 118V526M642.5 118V526M647.5 118V526M651.5 118V526M656.5 118V526M660.5 118V526M665.5 118V526M669.5 118V526M678.5 118V526M683.5 118V526M687.5 118V526M692.5 118V526M696.5 118V526M701.5 118V526M705.5 118V526M710.5 118V526M714.5 118V526M723.5 118V526M728.5 118V526M732.5 118V526M737.5 118V526M741.5 118V526M745.5 118V526M750.5 118V526M754.5 118V526M759.5 118V526M768.5 118V526M772.5 118V526M777.5 118V526M781.5 118V526M786.5 118V526M790.5 118V526M795.5 118V526M799.5 118V526M804.5 118V526M813.5 118V526M58 119.5H815M58 123.5H815M58 128.5H815M58 137.5H815M58 141.5H815M58 146.5H815M58 150.5H815M58 155.5H815M58 159.5H815M58 164.5H815M58 168.5H815M58 173.5H815M58 182.5H815M58 186.5H815M58 191.5H815M58 195.5H815M58 200.5H815M58 204.5H815M58 209.5H815M58 213.5H815M58 218.5H815M58 226.5H815M58 231.5H815M58 235.5H815M58 240.5H815M58 244.5H815M58 249.5H815M58 253.5H815M58 258.5H815M58 262.5H815M58 271.5H815M58 276.5H815M58 280.5H815M58 285.5H815M58 289.5H815M58 294.5H815M58 298.5H815M58 303.5H815M58 307.5H815M58 316.5H815M58 321.5H815M58 325.5H815M58 330.5H815M58 334.5H815M58 338.5H815M58 343.5H815M58 347.5H815M58 352.5H815M58 361.5H815M58 365.5H815M58 370.5H815M58 374.5H815M58 379.5H815M58 383.5H815M58 388.5H815M58 392.5H815M58 397.5H815M58 406.5H815M58 410.5H815M58 415.5H815M58 419.5H815M58 424.5H815M58 428.5H815M58 433.5H815M58 437.5H815M58 442.5H815M58 450.5H815M58 455.5H815M58 459.5H815M58 464.5H815M58 468.5H815M58 473.5H815M58 477.5H815M58 482.5H815M58 486.5H815M58 495.5H815M58 500.5H815M58 504.5H815M58 509.5H815M58 513.5H815M58 518.5H815M58 522.5H815" stroke="#999999" stroke-width="1" shape-rendering="crispEdges"/>
<path d="M91.5 118V526M136.5 118V526M181.5 118V526M226.5 118V526M271.5 118V526M315.5 118V526M360.5 118V526M405.5 118V526M450.5 118V526M495.5 118V526M539.5 118V526M584.5 118V526M629.5 118V526M674.5 118V526M719.5 118V526M763.5 118V526M808.5 118V526M58 132.5H815M58 177.5H815M58 222.5H815M58 267.5H815M58 312.5H815M58 356.5H815M58 401.5H815M58 446.5H815M58 491.5H815" stroke="#8d8d8d" stroke-width="1" shape-rendering="crispEdges"/>
<path d="M405 118V445" stroke="#45964a" stroke-width="2" shape-rendering="crispEdges"/>
<path d="M405 446H815" stroke="#a04040" stroke-width="2" shape-rendering="crispEdges"/>
<path d="M566 446.5H631" stroke="#050505" stroke-width="1" shape-rendering="crispEdges"/>
<g fill="none" stroke="#000" stroke-linecap="butt" stroke-linejoin="round" shape-rendering="crispEdges">
<path d="M241.5 419 L242 445 Q242.5 478 246 491 Q250 504 263 504.5 H549 Q562 504 565.5 489 L566 446 M249.5 452 V488.5 Q249.5 497.5 258.5 497.5 H551.5 Q560.5 497.5 560.5 488.5 V452 M251.5 452 V489.5 Q251.5 500.5 262.5 500.5 H547.5 Q558.5 500.5 558.5 489.5 V452 M263.5 452 V486.5 Q263.5 495.5 272.5 495.5 H539.5 Q548.5 495.5 548.5 486.5 V452 M270.5 452 V483.5 Q270.5 491.5 278.5 491.5 H532.5 Q540.5 491.5 540.5 483.5 V452 M263 463H545 M300 467H545 M250 472.5H560 M263 477.5H548 M250 460H300 M263 457 V483 Q263 488 268 489 M265.5 457 V487 Q265.5 492 270.5 493 M270 457 V490 Q270 495 275 496 M276 457 V492 Q276 497 281 498 M280 457 V485 Q280 490 285 491 M285 457 V494 Q285 499 290 500 M290 457 V487 Q290 492 295 493 M295 457 V495 Q295 500 300 501 M298 457 V483 Q298 488 303 489 M305 457 V489 Q305 494 310 495 M308 457 V485 Q308 490 313 491 M503.5 455 V485 Q503.5 490 498.5 491 M508 455 V489 Q508 494 503 495 M513 455 V483 Q513 488 508 489 M517 455 V495 Q517 500 512 501 M519.5 455 V493 Q519.5 498 514.5 499 M522 455 V495 Q522 500 517 501 M527 455 V492 Q527 497 522 498 M530 455 V483 Q530 488 525 489 M533 455 V487 Q533 492 528 493 M544 455 V490 Q544 495 539 496 M548 455 V483 Q548 488 543 489 M538 455 V465 Q538 470 533 471 M268 457V462 M273 457V462 M283 457V462 M293 457V462 M300 457V462 M312 457V462 M320 457V462 M330 457V462 M345 457V462 M390 457V462 M427 457V462 M471 457V462 M485 457V462 M495 457V462 M405.5 445V507.5 M409 480V503 M401 486V503 M500 470V490 M322 457.5 L332 462 M486 457.5 L476 462 M300 468 L345 470.5 M505 468 L471 470.5 M546 392 L556 432 M551 400 L560 432 M601.2 308.8 L602.7 315.2 L603.9 321.4 L605.0 327.4 L606.0 333.2 L606.9 338.3 L607.5 342.6 L608.1 345.8 L608.3 356.6 L608.0 367.0 L607.1 376.9 L605.7 386.3 L603.9 395.1 L601.6 403.4 L598.8 411.1 L595.7 418.1 L592.2 424.4 L588.3 430.0 L584.1 434.9 L579.7 438.9 L575.0 442.1 L570.0 444.5 M462.5 141.2 L464.1 140.9 L466.3 140.3 L469.0 139.7 L471.8 139.0 L474.6 138.4 L477.1 137.9 L479.4 137.5 L481.6 137.2 L483.8 136.9 L485.9 136.7 L488.0 136.6 L490.1 136.4 L492.0 136.3 L493.8 136.2 L495.6 136.2 L497.4 136.2 L499.3 136.3 L501.4 136.4 L503.6 136.5 L505.9 136.6 L508.3 136.8 L510.8 137.1 L513.4 137.5 L516.1 138.1 L519.1 138.9 L522.4 139.9 L525.8 141.0 L529.2 142.2 L532.3 143.5 L535.2 145.0 L537.6 146.6 L539.7 148.4 L541.6 150.3 L543.4 152.3 L545.2 154.4 L547.1 156.7 L548.9 158.8 L550.7 161.0 L552.5 163.2 L554.3 165.7 L556.2 168.6 L558.2 172.0 L560.5 176.2 L562.9 181.1 L565.5 186.3 L568.0 191.7 L570.3 197.1 L572.3 202.1 L574.0 206.8 L575.3 211.1 L576.5 215.3 L577.6 219.8 L578.9 224.6 L580.4 230.0 L582.2 236.3 L584.1 243.1 L586.1 250.3 L588.2 257.8 L590.3 265.2 L592.2 272.5 L594.1 279.7 L596.0 287.2 L597.8 294.6 L599.6 301.9 L601.2 308.8 M599.8 310.9 L601.2 317.1 L602.4 323.0 L603.5 328.9 L604.4 334.5 L605.2 339.5 L605.9 343.7 L606.4 346.8 L606.7 357.3 L606.4 367.4 L605.5 377.0 L604.2 386.2 L602.4 394.8 L600.1 402.9 L597.4 410.3 L594.4 417.2 L590.9 423.3 L587.2 428.8 L583.1 433.5 L578.8 437.5 L574.2 440.6 L569.3 442.9 M502.7 144.2 L504.3 144.3 L506.3 144.4 L508.8 144.6 L511.5 144.9 L514.3 145.3 L517.2 146.0 L520.1 146.8 L523.3 147.7 L526.6 148.8 L529.9 150.1 L533.0 151.5 L535.8 153.0 L538.1 154.6 L540.2 156.4 L542.1 158.3 L543.9 160.3 L545.6 162.4 L547.5 164.6 L549.3 166.8 L551.1 169.0 L552.8 171.3 L554.6 173.8 L556.4 176.7 L558.4 180.1 L560.6 184.2 L563.0 188.9 L565.5 194.1 L567.9 199.3 L570.2 204.5 L572.2 209.4 L573.8 213.9 L575.1 218.0 L576.2 222.0 L577.3 226.2 L578.5 230.8 L579.9 236.0 L581.6 241.9 L583.5 248.4 L585.4 255.3 L587.4 262.4 L589.4 269.5 L591.2 276.4 L593.0 283.3 L594.8 290.3 L596.6 297.4 L598.3 304.3 L599.8 310.9 M503.1 148.8 L504.6 148.9 L506.6 149.1 L509.0 149.3 L511.6 149.6 L514.3 150.1 L517.0 150.7 L519.9 151.6 L523.0 152.5 L526.2 153.7 L529.3 155.0 L532.3 156.4 L535.0 157.9 L537.3 159.5 L539.3 161.3 L541.1 163.2 L542.8 165.3 L544.5 167.4 L546.3 169.6 L548.1 171.8 L549.8 174.0 L551.5 176.3 L553.3 178.8 L555.1 181.7 L557.0 185.1 L559.1 189.2 L561.5 193.9 L563.9 199.0 L566.2 204.2 L568.5 209.3 L570.4 214.1 L571.9 218.4 L573.2 222.4 L574.3 226.3 L575.3 230.4 L576.5 234.8 L577.8 239.9 L579.5 245.6 L581.3 251.9 L583.2 258.6 L585.1 265.5 L587.0 272.4 L588.8 279.1 L590.5 285.8 L592.3 292.6 L594.0 299.4 L595.6 306.1 L597.1 312.6 M584.7 310.1 L585.3 312.8 L586.1 316.4 L587.1 320.8 L588.2 325.5 L589.2 330.2 L590.1 334.5 L590.9 338.7 L591.7 342.9 L592.5 347.1 L593.2 351.3 L593.8 355.4 L594.3 359.2 L594.7 362.9 L594.9 366.3 L595.1 369.7 L595.3 372.9 L595.3 376.2 L595.3 379.5 L595.3 382.9 L595.2 386.5 L595.1 390.1 L594.9 393.5 L594.6 396.6 L594.3 399.2 L593.8 401.5 L593.2 403.4 L592.5 405.0 L591.8 406.3 L591.2 407.4 L590.8 408.3 M587.0 396.8 L530.6 143.0 M503.0 165.8 L504.9 165.7 L507.6 165.5 L510.7 165.3 L514.2 165.2 L517.6 165.3 L520.9 165.7 L524.1 166.4 L527.4 167.2 L530.8 168.2 L534.1 169.5 L537.4 171.2 L540.7 173.5 L544.0 176.3 L547.3 179.5 L550.7 183.2 L553.9 187.3 L556.9 191.9 L559.6 196.9 L562.0 203.0 L564.2 210.3 L566.3 218.1 L568.0 225.6 L569.5 231.9 L570.6 236.4 M508.4 189.2 L509.9 189.2 L512.1 189.1 L514.6 189.0 L517.4 189.1 L520.2 189.3 L522.9 189.9 L525.5 190.6 L528.2 191.4 L530.9 192.4 L533.6 193.8 L536.4 195.7 L539.3 198.5 L542.2 202.1 L545.3 206.4 L548.4 211.3 L551.4 216.7 L554.3 222.4 L556.9 228.3 L559.2 235.0 L561.5 242.8 L563.5 250.9 L565.4 258.6 L566.9 265.2 L568.0 269.8 M513.8 212.5 L515.0 212.6 L516.6 212.7 L518.5 212.7 L520.6 212.9 L522.8 213.4 L524.9 214.1 L526.9 214.9 L528.9 215.6 L531.0 216.6 L533.2 218.0 L535.4 220.2 L537.8 223.4 L540.4 227.8 L543.2 233.3 L546.1 239.4 L548.9 246.1 L551.7 252.9 L554.1 259.7 L556.4 267.0 L558.7 275.3 L560.8 283.7 L562.7 291.7 L564.3 298.4 L565.4 303.3 M553.4 286.5 L590.1 276.6 M552.6 283.1 L589.3 273.1 M566.700 354.700 L587 430 M576 340 L585 364" stroke-width="1.05"/>
<path d="M553 403 L566 445 M549.500 398 L562.500 445 M557.500 405 L569.500 445 M597.1 312.6 L598.5 318.6 L599.7 324.5 L600.8 330.4 L601.7 336.0 L602.6 341.1 L603.3 345.3 L603.8 348.4 L604.1 358.5 L603.8 368.1 L603.0 377.3 L601.7 386.1 L600.0 394.3 L597.8 402.0 L595.2 409.2 L592.3 415.7 L589.0 421.6 L585.4 426.8 L581.5 431.3 L577.3 435.1 L572.9 438.1 L568.2 440.3 M503.7 155.4 L505.1 155.5 L507.0 155.7 L509.2 156.0 L511.7 156.3 L514.3 156.8 L516.8 157.5 L519.5 158.4 L522.4 159.4 L525.5 160.6 L528.5 161.9 L531.3 163.3 L533.8 164.9 L536.0 166.5 L537.9 168.3 L539.7 170.3 L541.3 172.3 L543.0 174.5 L544.7 176.7 L546.4 179.0 L548.0 181.2 L549.7 183.5 L551.4 186.0 L553.1 188.9 L554.9 192.3 L557.0 196.4 L559.2 201.0 L561.6 205.9 L563.8 211.0 L565.9 216.0 L567.8 220.7 L569.3 224.9 L570.5 228.7 L571.5 232.5 L572.5 236.3 L573.6 240.6 L574.9 245.4 L576.5 250.9 L578.2 256.9 L580.0 263.3 L581.8 269.9 L583.6 276.5 L585.4 282.9 L587.0 289.3 L588.7 295.8 L590.3 302.3 L591.8 308.7 M504.4 163.0 L505.7 163.2 L507.4 163.4 L509.5 163.7 L511.8 164.1 L514.2 164.6 L516.6 165.3 L519.1 166.2 L521.8 167.3 L524.7 168.5 L527.5 169.9 L530.2 171.4 L532.5 173.0 L534.6 174.7 L536.4 176.5 L538.0 178.4 L539.6 180.5 L541.2 182.7 L542.8 185.0 L544.4 187.2 L546.0 189.5 L547.6 191.8 L549.1 194.4 L550.8 197.3 L552.6 200.7 L554.5 204.6 L556.7 209.2 L558.9 214.0 L561.0 219.0 L563.0 223.9 L564.8 228.4 L566.2 232.4 L567.3 236.1 L568.3 239.6 L569.2 243.2 L570.3 247.2 L571.5 251.8 L573.0 257.0 L574.6 262.7 L576.3 268.8 L578.0 275.1 L579.8 281.3 L581.4 287.4 L582.9 293.4 L584.5 299.5 L586.0 305.7 L587.5 311.7 M505.1 170.8 L506.3 171.0 L507.9 171.2 L509.8 171.5 L511.9 172.0 L514.2 172.5 L516.4 173.3 L518.7 174.2 L521.2 175.4 L523.9 176.6 L526.5 178.0 L529.0 179.5 L531.2 181.2 L533.1 182.9 L534.8 184.8 L536.4 186.7 L537.8 188.8 L539.3 191.0 L540.9 193.3 L542.4 195.6 L543.9 197.9 L545.4 200.3 L546.9 202.9 L548.5 205.8 L550.2 209.1 L552.0 213.0 L554.0 217.5 L556.1 222.3 L558.2 227.1 L560.1 231.8 L561.7 236.2 L563.1 240.0 L564.1 243.5 L565.0 246.8 L565.9 250.2 L566.9 254.0 L568.1 258.3 L569.4 263.2 L571.0 268.6 L572.6 274.4 L574.2 280.3 L575.8 286.2 L577.3 291.9 L578.8 297.6 L580.2 303.3 L581.7 309.0 L583.0 314.7 M505.8 179.2 L506.9 179.4 L508.4 179.7 L510.1 180.1 L512.1 180.5 L514.1 181.2 L516.1 182.0 L518.2 183.0 L520.6 184.1 L523.0 185.4 L525.4 186.9 L527.7 188.5 L529.7 190.1 L531.5 191.9 L533.1 193.8 L534.5 195.8 L535.9 197.9 L537.3 200.1 L538.8 202.4 L540.2 204.7 L541.6 207.1 L543.0 209.5 L544.5 212.1 L545.9 215.0 L547.5 218.3 L549.3 222.2 L551.2 226.6 L553.2 231.2 L555.1 235.9 L556.9 240.5 L558.4 244.7 L559.7 248.3 L560.6 251.6 L561.5 254.7 L562.3 257.9 L563.2 261.4 L564.3 265.4 L565.6 270.0 L567.0 275.1 L568.5 280.4 L570.0 285.9 L571.5 291.5 L572.9 296.8 L574.3 302.1 L575.6 307.4 L576.9 312.7 M500.3 154.1 L502.4 153.9 L505.3 153.7 L508.8 153.4 L512.5 153.2 L516.3 153.3 L520.0 153.7 L523.4 154.3 L527.0 155.1 L530.7 156.1 L534.3 157.3 L537.9 159.0 L541.4 161.0 L544.9 163.4 L548.4 166.1 L551.8 169.2 L555.1 172.6 L558.2 176.6 L560.9 181.2 L563.4 187.0 L565.6 194.1 L567.6 201.7 L569.3 209.0 L570.8 215.3 L571.8 219.7 M505.7 177.5 L507.4 177.4 L509.8 177.3 L512.7 177.1 L515.8 177.1 L518.9 177.3 L521.9 177.8 L524.8 178.5 L527.8 179.3 L530.8 180.3 L533.9 181.6 L536.9 183.5 L540.0 186.0 L543.1 189.2 L546.3 193.0 L549.5 197.3 L552.7 202.0 L555.6 207.1 L558.2 212.6 L560.6 219.0 L562.9 226.6 L564.9 234.5 L566.7 242.1 L568.2 248.6 L569.3 253.1 M511.1 200.9 L512.4 200.9 L514.3 200.9 L516.6 200.9 L519.0 201.0 L521.5 201.3 L523.9 202.0 L526.2 202.8 L528.6 203.5 L531.0 204.5 L533.4 205.9 L535.9 208.0 L538.5 211.0 L541.3 215.0 L544.2 219.8 L547.2 225.4 L550.2 231.4 L553.0 237.6 L555.5 244.0 L557.8 251.0 L560.1 259.0 L562.2 267.3 L564.0 275.2 L565.6 281.8 L566.7 286.6 M499.2 158.4 L518.4 157.1 M501.5 168.2 L523.1 166.3 M503.7 177.9 L527.8 175.5 M506.0 187.7 L532.5 184.6 M508.2 197.4 L537.2 193.8 M510.2 206.2 L541.4 202.1 M512.3 214.9 L545.6 210.4 M514.1 222.7 L549.3 217.7 M557.3 374.9 L558.6 374.2 L560.3 373.3 L562.4 372.1 L564.7 370.9 L567.0 369.5 L569.1 368.1 L571.2 366.5 L573.5 364.6 L575.9 362.7 L578.0 360.8 L579.8 359.3 L581.2 358.1 M558.9 381.7 L560.1 381.0 L561.9 380.1 L563.9 379.0 L566.2 377.7 L568.4 376.3 L570.6 374.9 L573.0 373.3 L575.5 371.4 L578.2 369.4 L580.6 367.4 L582.7 365.8 L584.2 364.6 M560.4 388.6 L561.7 387.9 L563.4 386.9 L565.4 385.8 L567.6 384.6 L569.9 383.2 L572.2 381.7 L574.7 380.1 L577.5 378.1 L580.5 376.0 L583.2 374.0 L585.5 372.3 L587.2 371.1 M562.0 395.4 L563.2 394.7 L564.9 393.8 L566.9 392.7 L569.1 391.4 L571.4 390.0 L573.8 388.6 L576.5 386.9 L579.5 384.8 L582.8 382.7 L585.8 380.6 L588.4 378.8 L590.2 377.6 M563.6 402.2 L564.8 401.5 L566.4 400.6 L568.4 399.5 L570.5 398.2 L572.9 396.9 L575.4 395.4 L578.2 393.6 L581.5 391.5 L585.1 389.3 L588.4 387.2 L591.3 385.4 L593.3 384.1 M565.2 409.0 L566.4 408.3 L567.9 407.4 L569.8 406.3 L572.0 405.1 L574.4 403.7 L576.9 402.2 L579.9 400.4 L583.5 398.3 L587.4 396.0 L591.0 393.8 L594.1 391.9 L596.3 390.6 M566.7 415.8 L567.9 415.2 L569.4 414.3 L571.3 413.2 L573.5 411.9 L575.9 410.5 L578.5 409.0 L581.7 407.2 L585.6 405.0 L589.7 402.6 L593.6 400.3 L597.0 398.4 L599.3 397.1" stroke-width="1.7"/>
<path d="M591.8 308.7 L593.3 314.9 L594.6 320.7 L595.8 326.5 L596.9 332.4 L597.9 338.1 L598.8 343.3 L599.5 347.6 L600.1 350.8 L600.3 360.1 L600.1 369.2 L599.4 377.8 L598.2 385.9 L596.5 393.6 L594.5 400.8 L592.1 407.5 L589.3 413.6 L586.2 419.1 L582.8 424.0 L579.1 428.2 L575.2 431.7 L571.1 434.5 L566.7 436.6 M587.5 311.7 L588.9 317.6 L590.1 323.2 L591.3 329.0 L592.4 334.8 L593.5 340.6 L594.4 345.8 L595.2 350.2 L595.7 353.4 L596.0 362.1 L595.8 370.3 L595.2 378.3 L594.1 385.8 L592.6 392.8 L590.7 399.5 L588.4 405.6 L585.9 411.2 L583.0 416.2 L579.8 420.7 L576.4 424.6 L572.8 427.8 L568.9 430.4 L564.9 432.3 M583.0 314.7 L584.4 320.3 L585.6 325.8 L586.8 331.4 L587.9 337.3 L589.0 343.1 L589.9 348.4 L590.8 352.9 L591.4 356.2 L591.7 364.0 L591.5 371.6 L590.9 378.8 L589.9 385.6 L588.5 392.0 L586.8 398.0 L584.7 403.6 L582.4 408.7 L579.7 413.3 L576.8 417.4 L573.7 420.9 L570.3 423.9 L566.8 426.2 L563.1 427.9 M576.9 312.7 L578.2 318.0 L579.5 323.3 L580.6 328.5 L581.8 334.1 L583.0 340.0 L584.1 345.8 L585.1 351.3 L585.9 355.8 L586.6 359.2 L586.9 366.2 L586.8 372.9 L586.3 379.3 L585.4 385.4 L584.1 391.1 L582.6 396.5 L580.7 401.5 L578.6 406.0 L576.2 410.2 L573.5 413.8 L570.7 416.9 L567.6 419.6 L564.5 421.7 L561.1 423.2 M588.1 283.7 L589.4 289.3 L591.3 297.2 L593.4 306.5 L595.6 316.2 L597.6 325.1 L599.2 332.4 L600.3 338.0 L601.1 342.6 L601.8 346.6 L602.3 350.2 L602.7 353.6 L603.1 357.2 L603.4 360.9 L603.7 364.6 L603.8 368.1 L603.9 371.5 L603.8 374.7 L603.6 377.6 L603.3 380.2 L602.8 382.6 L602.2 384.9 L601.5 386.9 L600.8 388.8 L600.1 390.7 L599.4 392.6 L598.6 394.4 L597.7 396.1 L596.9 397.7 L596.3 399.0 L595.8 399.9 M586.0 294.4 L587.0 298.8 L588.5 305.1 L590.2 312.4 L591.9 320.1 L593.5 327.3 L594.8 333.4 L595.8 338.4 L596.6 342.9 L597.4 347.0 L597.9 350.8 L598.4 354.5 L598.9 358.2 L599.2 361.8 L599.5 365.4 L599.6 368.8 L599.7 372.1 L599.7 375.3 L599.7 378.5 L599.5 381.7 L599.3 385.0 L599.0 388.2 L598.6 391.2 L598.2 394.0 L597.7 396.4 L597.1 398.5 L596.4 400.4 L595.6 402.1 L594.8 403.5 L594.2 404.6 L593.7 405.5 M580.7 316.2 L581.2 318.2 L581.8 321.0 L582.6 324.4 L583.4 328.1 L584.3 331.9 L585.0 335.7 L585.8 339.6 L586.6 343.7 L587.4 348.0 L588.1 352.3 L588.8 356.4 L589.3 360.4 L589.8 364.0 L590.1 367.5 L590.4 370.9 L590.5 374.2 L590.7 377.4 L590.7 380.6 L590.7 383.8 L590.6 387.0 L590.5 390.1 L590.3 393.1 L590.0 395.8 L589.7 398.3 L589.3 400.3 L588.7 402.2 L588.1 403.8 L587.5 405.2 L587.0 406.3 L586.6 407.2 M546 166 L550.500 184 M540.500 181 L545 199 M553 174 L561 203 M534 170 L538 186 M501.6 159.9 L503.1 159.9 L505.1 159.8 L507.5 159.7 L510.1 159.6 L512.6 159.7 L515.0 159.9 L517.2 160.3 L519.4 160.8 L521.7 161.4 L523.9 162.1 L526.1 163.0 L528.3 164.1 L530.5 165.4 L532.9 167.2 L535.3 169.0 L537.5 170.9 L539.3 172.4 L540.7 173.5 M503.9 169.7 L505.3 169.6 L507.3 169.5 L509.7 169.4 L512.2 169.4 L514.8 169.5 L517.2 169.7 L519.6 170.0 L522.0 170.5 L524.4 171.0 L526.8 171.7 L529.2 172.6 L531.5 173.6 L533.9 174.9 L536.4 176.6 L538.8 178.5 L541.1 180.3 L543.0 181.8 L544.4 182.9 M506.1 179.4 L507.6 179.4 L509.5 179.3 L511.9 179.2 L514.4 179.1 L517.0 179.2 L519.5 179.4 L521.9 179.8 L524.5 180.2 L527.1 180.7 L529.7 181.3 L532.2 182.1 L534.7 183.1 L537.2 184.4 L539.8 186.1 L542.3 187.9 L544.7 189.7 L546.7 191.3 L548.1 192.3 M508.4 189.2 L509.8 189.1 L511.7 189.0 L514.0 188.9 L516.6 188.9 L519.2 189.0 L521.7 189.2 L524.3 189.5 L527.0 189.9 L529.8 190.3 L532.6 190.9 L535.3 191.7 L537.9 192.6 L540.5 193.9 L543.2 195.6 L545.9 197.4 L548.3 199.2 L550.3 200.7 L551.8 201.7 M510.6 198.9 L512.0 198.9 L513.9 198.8 L516.2 198.7 L518.7 198.7 L521.4 198.7 L524.0 198.9 L526.6 199.2 L529.5 199.5 L532.5 200.0 L535.5 200.5 L538.4 201.2 L541.1 202.1 L543.9 203.4 L546.7 205.1 L549.4 206.8 L551.9 208.6 L554.0 210.1 L555.5 211.1" stroke-width="2.3"/>
<path d="M518 447 V441.500 Q518 436.500 524.500 435 L538 431.500 Q547.500 429 550 417 L552 401" stroke-width="7.5"/>
</g>
<path d="M251 445 H561 V452 H248.5 V447.5 Q248.5 445 251 445Z M250 454 H520 V457.5 H250Z M520 454 H560 V455.5 H520Z M250 482H560V484H250Z M262 487H551V489H262Z M257 491H553V492H257Z M262 494H549V496H262Z M262 497H548V499H262Z M266 500H546V501H266Z M300 479H340V480H300Z M475 479H515V480H475Z M300 485H520V486H300Z M303 462 H505 V467.5 H303Z M318 467 H340 V469 H318Z M470 467 H492 V469 H470Z M515.5 452 H523 V480 H515.5Z M526.5 452 H535 V470 H526.5Z M345.7 470 H389.7 V476 Q389.7 483.5 381.7 483.5 H353.7 Q345.7 483.5 345.7 476Z M427.2 470 H471.2 V476 Q471.2 483.5 463.2 483.5 H435.2 Q427.2 483.5 427.2 476Z M547.9 409.9 L485.8 140.0 L488.7 139.3 L497.2 138.4 L503.0 163.7 L516.7 185.2 L531.8 206.3 L540.9 227.9 L548.4 251.8 L552.3 281.7 L562.1 315.3 L566.8 345.0 L566.5 365.6 L563.0 381.8 L563.4 397.1 L563.1 404.4Z" fill="#000" shape-rendering="crispEdges"/>
<path d="M349.7 479.5v.01 M350.7 481.5v.01 M352.7 479.5v.01 M353.7 481.5v.01 M363.7 479.5v.01 M364.7 481.5v.01 M366.2 479.5v.01 M367.2 481.5v.01 M368.7 479.5v.01 M369.7 481.5v.01 M371.2 479.5v.01 M372.2 481.5v.01 M382.7 479.5v.01 M383.7 481.5v.01 M385.7 479.5v.01 M386.7 481.5v.01 M348 471v.01 M352 471v.01 M356 471v.01 M360 471v.01 M364 471v.01 M368 471v.01 M372 471v.01 M376 471v.01 M380 471v.01 M384 471v.01 M431.2 479.5v.01 M432.2 481.5v.01 M434.2 479.5v.01 M435.2 481.5v.01 M445.2 479.5v.01 M446.2 481.5v.01 M447.7 479.5v.01 M448.7 481.5v.01 M450.2 479.5v.01 M451.2 481.5v.01 M452.7 479.5v.01 M453.7 481.5v.01 M464.2 479.5v.01 M465.2 481.5v.01 M467.2 479.5v.01 M468.2 481.5v.01 M430 471v.01 M434 471v.01 M438 471v.01 M442 471v.01 M446 471v.01 M450 471v.01 M454 471v.01 M458 471v.01 M462 471v.01 M466 471v.01 M550.9 405.1 L491.5 146.9 M552.1 394.6 L496.0 151.0 M553.7 383.9 L503.3 164.7 M554.9 373.4 L511.8 186.3" fill="none" stroke="#9c9c9c" stroke-width="1" stroke-dasharray="1 3" stroke-linecap="round"/>
<path d="M520.500 439 Q526 436.500 538 434 Q546 431.500 548.500 422" fill="none" stroke="#9a9a9a" stroke-width="1" stroke-dasharray="1 2.500"/>
<path d="M95.500 462V490.500H125" fill="none" stroke="#6a6a6a" stroke-width="1" shape-rendering="crispEdges"/>
<text x="96" y="463" font-size="11" font-weight="bold" fill="#6e6e6e" font-family="Liberation Sans,sans-serif">z</text>
<text x="126" y="492" font-size="11" font-weight="bold" fill="#6e6e6e" font-family="Liberation Sans,sans-serif">y</text>
</svg>
<div class="abs" style="left:0;top:0;width:68px;height:18px;background:#9cb8d8"></div>
<div class="abs" style="left:8px;top:1px;font-size:12.5px;font-weight:bold;letter-spacing:.55px">Derecha</div>
</div>
<div id="props" class="abs">
<div class="abs" style="left:0;top:0;width:2px;height:408px;background:#fdfdfd"></div><div class="abs" style="left:0;top:1px;width:209px;height:2px;background:#fdfdfd"></div><div class="abs" style="left:0;top:0;width:209px;height:1px;background:#a6a6a6"></div>
<div class="abs" style="left:11px;top:4px;font-size:12px;letter-spacing:-.15px">Propiedades</div>
<div class="abs" style="left:97px;top:3px;width:97px;height:16px;background:#dfdfdf"></div>
<div class="abs" style="left:80px;top:9px;width:113px;height:7px;background-size:4px 4px;background-image:radial-gradient(circle at 1px 1px,#fafafa 0.9px,transparent 1.1px),radial-gradient(circle at 2px 2px,#b0b0b0 0.9px,transparent 1.1px)"></div>
<div class="abs" style="left:195px;top:4px;width:13px;height:13px;border:1px solid #6e2626;border-radius:2px;background:linear-gradient(#d4a29c,#bd6a60 50%,#ad4c44)"></div>
<svg style="left:198px;top:7px;width:7px;height:7px" viewBox="0 0 7 7"><path d="M1 1L6 6M6 1L1 6" stroke="#fff" stroke-width="1.600"/></svg>
<div class="abs" style="left:12px;top:23px;letter-spacing:-.2px">Vista</div><div class="abs" style="left:40px;top:33px;width:167px;height:1px;background:#a0a0a0"></div>
<div class="abs" style="left:20px;top:44px;width:88px;height:17px;background:#fff;color:#000"><span class="abs" style="left:4px;top:2px;white-space:nowrap;letter-spacing:-.2px">Título</span></div><div class="abs" style="left:109px;top:44px;width:95px;height:17px;background:#fff;color:#000"><span class="abs" style="left:4px;top:2px;white-space:nowrap">Derecha</span></div>
<div class="abs" style="left:20px;top:63px;width:88px;height:17px;background:#fff;color:#6d6d6d"><span class="abs" style="left:4px;top:2px;white-space:nowrap;letter-spacing:-.2px">Anchura</span></div><div class="abs" style="left:109px;top:63px;width:95px;height:17px;background:#fff;color:#6d6d6d"><span class="abs" style="left:4px;top:2px;white-space:nowrap">757</span></div>
<div class="abs" style="left:20px;top:82px;width:88px;height:17px;background:#fff;color:#6d6d6d"><span class="abs" style="left:4px;top:2px;white-space:nowrap;letter-spacing:-.2px">Altura</span></div><div class="abs" style="left:109px;top:82px;width:95px;height:17px;background:#fff;color:#6d6d6d"><span class="abs" style="left:4px;top:2px;white-space:nowrap">408</span></div>
<div class="abs" style="left:20px;top:101px;width:88px;height:17px;background:#fff;color:#000"><span class="abs" style="left:4px;top:2px;white-space:nowrap;letter-spacing:-.2px">Proyección</span></div><div class="abs" style="left:109px;top:101px;width:95px;height:17px;background:#fff;color:#000"><span class="abs" style="left:4px;top:2px;white-space:nowrap">Paralela</span><div class="abs" style="left:78px;top:0;width:17px;height:17px;background:linear-gradient(#f6f6f6,#dadada);border:1px solid #8a8a8a;border-right-color:#404040;border-bottom-color:#404040"></div><svg style="left:83px;top:7px;width:7px;height:4px" viewBox="0 0 7 4"><path d="M0 0H7L3.500 4Z" fill="#000"/></svg></div>
<div class="abs" style="left:15px;top:124px">Cámara</div>
<div class="abs" style="left:20px;top:143px;width:88px;height:17px;background:#fff;color:#6d6d6d"><span class="abs" style="left:4px;top:2px;white-space:nowrap;letter-spacing:-.2px">Distancia focal</span></div><div class="abs" style="left:109px;top:143px;width:95px;height:17px;background:#fff;color:#6d6d6d"><span class="abs" style="left:4px;top:2px;white-space:nowrap">50.0</span></div>
<div class="abs" style="left:20px;top:162px;width:88px;height:17px;background:#fff;color:#000"><span class="abs" style="left:4px;top:2px;white-space:nowrap;letter-spacing:-.2px">Posición X</span></div><div class="abs" style="left:109px;top:162px;width:95px;height:17px;background:#fff;color:#000"><span class="abs" style="left:4px;top:2px;white-space:nowrap">104.498</span></div>
<div class="abs" style="left:20px;top:181px;width:88px;height:17px;background:#fff;color:#000"><span class="abs" style="left:4px;top:2px;white-space:nowrap;letter-spacing:-.2px">Posición Y</span></div><div class="abs" style="left:109px;top:181px;width:95px;height:17px;background:#fff;color:#000"><span class="abs" style="left:4px;top:2px;white-space:nowrap">6.980</span></div>
<div class="abs" style="left:20px;top:200px;width:88px;height:17px;background:#fff;color:#000"><span class="abs" style="left:4px;top:2px;white-space:nowrap;letter-spacing:-.2px">Posición Z</span></div><div class="abs" style="left:109px;top:200px;width:95px;height:17px;background:#fff;color:#000"><span class="abs" style="left:4px;top:2px;white-space:nowrap">27.746</span></div>
<div class="abs" style="left:20px;top:219px;width:88px;height:17px;background:#fff;color:#000"><span class="abs" style="left:4px;top:2px;white-space:nowrap;letter-spacing:-.2px">Posición</span></div><div class="abs" style="left:109px;top:219px;width:95px;height:17px;background:#fff;color:#000"><span class="abs" style="left:4px;top:2px;white-space:nowrap"></span><div class="abs" style="left:1px;top:0;width:94px;height:17px;border:1px solid #707070;border-radius:3px;background:linear-gradient(#f4f4f4,#ececec 48%,#dcdcdc 52%,#d0d0d0);text-align:center;line-height:15px;color:#000">Colocar...</div></div>
<div class="abs" style="left:15px;top:243px">Objetivo</div>
<div class="abs" style="left:20px;top:261px;width:88px;height:17px;background:#fff;color:#000"><span class="abs" style="left:4px;top:2px;white-space:nowrap;letter-spacing:-.2px">Objetivo X</span></div><div class="abs" style="left:109px;top:261px;width:95px;height:17px;background:#fff;color:#000"><span class="abs" style="left:4px;top:2px;white-space:nowrap">-0.007</span></div>
<div class="abs" style="left:20px;top:280px;width:88px;height:17px;background:#fff;color:#000"><span class="abs" style="left:4px;top:2px;white-space:nowrap;letter-spacing:-.2px">Objetivo Y</span></div><div class="abs" style="left:109px;top:280px;width:95px;height:17px;background:#fff;color:#000"><span class="abs" style="left:4px;top:2px;white-space:nowrap">6.980</span></div>
<div class="abs" style="left:20px;top:299px;width:88px;height:17px;background:#fff;color:#000"><span class="abs" style="left:4px;top:2px;white-space:nowrap;letter-spacing:-.2px">Objetivo Z</span></div><div class="abs" style="left:109px;top:299px;width:95px;height:17px;background:#fff;color:#000"><span class="abs" style="left:4px;top:2px;white-space:nowrap">27.746</span></div>
<div class="abs" style="left:20px;top:318px;width:88px;height:17px;background:#fff;color:#000"><span class="abs" style="left:4px;top:2px;white-space:nowrap;letter-spacing:-.2px">Posición</span></div><div class="abs" style="left:109px;top:318px;width:95px;height:17px;background:#fff;color:#000"><span class="abs" style="left:4px;top:2px;white-space:nowrap"></span><div class="abs" style="left:1px;top:0;width:94px;height:17px;border:1px solid #707070;border-radius:3px;background:linear-gradient(#f4f4f4,#ececec 48%,#dcdcdc 52%,#d0d0d0);text-align:center;line-height:15px;color:#000">Colocar...</div></div>
<div class="abs" style="left:15px;top:342px">Papeltapiz</div>
<div class="abs" style="left:20px;top:360px;width:88px;height:17px;background:#fff;color:#000"><span class="abs" style="left:4px;top:2px;white-space:nowrap;letter-spacing:-.2px">NombreDeArch...</span></div><div class="abs" style="left:109px;top:360px;width:95px;height:17px;background:#fff;color:#000"><span class="abs" style="left:4px;top:2px;white-space:nowrap">(ninguno)</span><div class="abs" style="left:78px;top:0;width:17px;height:17px;border:1px solid #707070;border-radius:3px;background:linear-gradient(#f4f4f4,#d8d8d8);text-align:center;line-height:10px;font-size:11px">...</div></div>
<div class="abs" style="left:20px;top:379px;width:88px;height:17px;background:#fff;color:#000"><span class="abs" style="left:4px;top:2px;white-space:nowrap;letter-spacing:-.2px">Mostrar</span></div><div class="abs" style="left:109px;top:379px;width:95px;height:17px;background:#fff;color:#000"><span class="abs" style="left:4px;top:2px;white-space:nowrap"></span><div class="abs" style="left:4px;top:2px;width:13px;height:13px;border:1px solid #8e8f8f;background:linear-gradient(135deg,#e4e6ea,#fff)"></div><svg style="left:6px;top:4px;width:10px;height:9px" viewBox="0 0 10 9"><path d="M1 4L4 7.500L9 1" fill="none" stroke="#3a4a9a" stroke-width="1.800"/></svg></div>
<div class="abs" style="left:20px;top:398px;width:88px;height:17px;background:#fff;color:#000"><span class="abs" style="left:4px;top:2px;white-space:nowrap;letter-spacing:-.2px">Gris</span></div><div class="abs" style="left:109px;top:398px;width:95px;height:17px;background:#fff;color:#000"><span class="abs" style="left:4px;top:2px;white-space:nowrap"></span><div class="abs" style="left:4px;top:2px;width:13px;height:13px;border:1px solid #8e8f8f;background:linear-gradient(135deg,#e4e6ea,#fff)"></div><svg style="left:6px;top:4px;width:10px;height:9px" viewBox="0 0 10 9"><path d="M1 4L4 7.500L9 1" fill="none" stroke="#3a4a9a" stroke-width="1.800"/></svg></div>
<div class="abs" style="left:0;top:406px;width:209px;height:2px;background:#f0f0f0;border-top:1px solid #b8b8b8"></div>
</div>
<div id="osnap" class="abs">
<div class="abs" style="left:0;top:0;width:1024px;height:1px;background:#fbfbfb"></div>
<div class="abs grip" style="left:3px;top:4px;width:3px;height:17px"></div>
<div class="abs" style="left:11px;top:5px;width:13px;height:13px;border:1px solid #8e8f8f;background:linear-gradient(135deg,#dfe1e4,#fdfdfd 70%);box-shadow:inset 0 0 0 1px #f4f4f4"></div><div class="abs" style="left:29px;top:6px;font-size:11px;letter-spacing:-.3px;white-space:nowrap">Fin</div>
<div class="abs" style="left:83px;top:5px;width:13px;height:13px;border:1px solid #8e8f8f;background:linear-gradient(135deg,#dfe1e4,#fdfdfd 70%);box-shadow:inset 0 0 0 1px #f4f4f4"></div><div class="abs" style="left:101px;top:6px;font-size:11px;letter-spacing:-.3px;white-space:nowrap">Cerca</div>
<div class="abs" style="left:155px;top:5px;width:13px;height:13px;border:1px solid #8e8f8f;background:linear-gradient(135deg,#dfe1e4,#fdfdfd 70%);box-shadow:inset 0 0 0 1px #f4f4f4"></div><div class="abs" style="left:173px;top:6px;font-size:11px;letter-spacing:-.3px;white-space:nowrap">Punto</div>
<div class="abs" style="left:227px;top:5px;width:13px;height:13px;border:1px solid #8e8f8f;background:linear-gradient(135deg,#dfe1e4,#fdfdfd 70%);box-shadow:inset 0 0 0 1px #f4f4f4"></div><div class="abs" style="left:245px;top:6px;font-size:11px;letter-spacing:-.3px;white-space:nowrap">Med</div>
<div class="abs" style="left:299px;top:5px;width:13px;height:13px;border:1px solid #8e8f8f;background:linear-gradient(135deg,#dfe1e4,#fdfdfd 70%);box-shadow:inset 0 0 0 1px #f4f4f4"></div><div class="abs" style="left:317px;top:6px;font-size:11px;letter-spacing:-.3px;white-space:nowrap">Cen</div>
<div class="abs" style="left:371px;top:5px;width:13px;height:13px;border:1px solid #8e8f8f;background:linear-gradient(135deg,#dfe1e4,#fdfdfd 70%);box-shadow:inset 0 0 0 1px #f4f4f4"></div><div class="abs" style="left:389px;top:6px;font-size:11px;letter-spacing:-.3px;white-space:nowrap">Int</div>
<div class="abs" style="left:443px;top:5px;width:13px;height:13px;border:1px solid #8e8f8f;background:linear-gradient(135deg,#dfe1e4,#fdfdfd 70%);box-shadow:inset 0 0 0 1px #f4f4f4"></div><div class="abs" style="left:461px;top:6px;font-size:11px;letter-spacing:-.3px;white-space:nowrap">Perp</div>
<div class="abs" style="left:515px;top:5px;width:13px;height:13px;border:1px solid #8e8f8f;background:linear-gradient(135deg,#dfe1e4,#fdfdfd 70%);box-shadow:inset 0 0 0 1px #f4f4f4"></div><div class="abs" style="left:533px;top:6px;font-size:11px;letter-spacing:-.3px;white-space:nowrap">Tan</div>
<div class="abs" style="left:587px;top:5px;width:13px;height:13px;border:1px solid #8e8f8f;background:linear-gradient(135deg,#dfe1e4,#fdfdfd 70%);box-shadow:inset 0 0 0 1px #f4f4f4"></div><div class="abs" style="left:605px;top:6px;font-size:11px;letter-spacing:-.3px;white-space:nowrap">Cuad</div>
<div class="abs" style="left:659px;top:5px;width:13px;height:13px;border:1px solid #8e8f8f;background:linear-gradient(135deg,#dfe1e4,#fdfdfd 70%);box-shadow:inset 0 0 0 1px #f4f4f4"></div><div class="abs" style="left:677px;top:6px;font-size:11px;letter-spacing:-.3px;white-space:nowrap">Nodo</div>
<div class="abs" style="left:731px;top:5px;width:14px;height:14px;border:1px solid #707070;border-radius:3px;background:linear-gradient(#f6f6f6,#dcdcdc)"></div><div class="abs" style="left:750px;top:6px;font-size:11px;letter-spacing:-.2px;white-space:nowrap">Proyectar</div>
<div class="abs" style="left:803px;top:5px;width:14px;height:14px;border:1px solid #707070;border-radius:3px;background:linear-gradient(#f6f6f6,#dcdcdc)"></div><div class="abs" style="left:822px;top:6px;font-size:11px;letter-spacing:-.2px;white-space:nowrap">STrack</div>
<div class="abs" style="left:874px;top:5px;width:14px;height:14px;border:1px solid #707070;border-radius:3px;background:linear-gradient(#f6f6f6,#dcdcdc)"></div><div class="abs" style="left:893px;top:6px;font-size:11px;letter-spacing:-.2px;white-space:nowrap">Desactivar</div>
<div class="abs" style="left:952px;top:2px;width:1px;height:20px;background:#c6c6c6"></div><div class="abs" style="left:953px;top:2px;width:1px;height:20px;background:#fafafa"></div>
<div class="abs" style="left:0;top:23px;width:1024px;height:1px;background:#a9a9a9"></div>
</div>
<div id="status" class="abs">
<div class="abs" style="left:0;top:0;width:1024px;height:1px;background:#fff"></div>
<div class="abs" style="left:9px;top:4px;white-space:nowrap;letter-spacing:-0.3px">PlanoC</div>
<div class="abs" style="left:60px;top:4px;white-space:nowrap;letter-spacing:-0.65px">x 76.36</div>
<div class="abs" style="left:148px;top:4px;white-space:nowrap;letter-spacing:-0.6px">y 61.93</div>
<div class="abs" style="left:236px;top:4px;white-space:nowrap;letter-spacing:-0.65px">z 0.00</div>
<div class="abs" style="left:414px;top:5px;width:11px;height:12px;background:#000"></div>
<div class="abs" style="left:427px;top:4px;white-space:nowrap;letter-spacing:-0.1px">Predeterminada</div>
<div class="abs" style="left:589px;top:4px;white-space:nowrap;letter-spacing:-0.1px">Forzado</div>
<div class="abs" style="left:653px;top:4px;white-space:nowrap;font-weight:bold;letter-spacing:-.2px">Orto</div>
<div class="abs" style="left:705px;top:4px;white-space:nowrap;font-weight:bold;letter-spacing:-.2px">Planar</div>
<div class="abs" style="left:760px;top:4px;white-space:nowrap;letter-spacing:-0.1px">RefObj</div>
<div class="abs" style="left:822px;top:4px;white-space:nowrap;letter-spacing:-0.1px">Grabar historial</div>
<div class="abs" style="left:55px;top:2px;width:1px;height:17px;background:#c9c9c9"></div><div class="abs" style="left:56px;top:2px;width:1px;height:17px;background:#fff"></div>
<div class="abs" style="left:581px;top:2px;width:1px;height:17px;background:#c9c9c9"></div><div class="abs" style="left:582px;top:2px;width:1px;height:17px;background:#fff"></div>
<div class="abs" style="left:640px;top:2px;width:1px;height:17px;background:#c9c9c9"></div><div class="abs" style="left:641px;top:2px;width:1px;height:17px;background:#fff"></div>
<div class="abs" style="left:693px;top:2px;width:1px;height:17px;background:#c9c9c9"></div><div class="abs" style="left:694px;top:2px;width:1px;height:17px;background:#fff"></div>
<div class="abs" style="left:750px;top:2px;width:1px;height:17px;background:#c9c9c9"></div><div class="abs" style="left:751px;top:2px;width:1px;height:17px;background:#fff"></div>
<div class="abs" style="left:805px;top:2px;width:1px;height:17px;background:#c9c9c9"></div><div class="abs" style="left:806px;top:2px;width:1px;height:17px;background:#fff"></div>
<div class="abs" style="left:916px;top:2px;width:1px;height:17px;background:#c9c9c9"></div><div class="abs" style="left:917px;top:2px;width:1px;height:17px;background:#fff"></div>
</div>
<div id="taskbar" class="abs">
<div class="abs" style="left:0;top:0;width:1024px;height:1px;background:#a9bcd6"></div>
<div class="abs" style="left:244px;top:1px;width:160px;height:29px;border:1px solid #4e627f;border-radius:3px;background:linear-gradient(#97aac6,#8a9fbd 45%,#8096b5 50%,#869bb9);box-shadow:inset 0 0 0 1px rgba(255,255,255,.35)"><svg style="left:9px;top:4px;width:16px;height:19px" viewBox="0 0 16 19"><path d="M1 2.500 Q1 1 2.500 1 H7 L8.500 2.500 V17.500 H1Z" fill="#f3d35a" stroke="#b58f1c" stroke-width=".8"/><path d="M7 2 H13 Q14 2 14 3 V17 Q14 18 13 18 H7Z" fill="#fbe89a" stroke="#c9a42c" stroke-width=".8"/><rect x="11.500" y="12" width="1.500" height="3" fill="#3a8ad8"/></svg><span class="abs" style="left:29px;top:6px;color:#fff;font-size:12px;letter-spacing:-.2px;white-space:nowrap;text-shadow:0 0 2px rgba(0,0,0,.45)">estuche4</span></div>
<div class="abs" style="left:406px;top:1px;width:159px;height:29px;border:1px solid #4e627f;border-radius:3px;background:linear-gradient(#c5d1e2,#b1c0d6 45%,#a0b2cc 50%,#b0c1d8);box-shadow:inset 0 0 0 1px rgba(255,255,255,.35)"><svg style="left:8px;top:5px;width:16px;height:16px" viewBox="0 0 16 16"><rect width="16" height="16" fill="#000"/><path d="M1 2 L4 1 L6 3 L9 5 L13 4 L15 5 L11 8 L11 11 L9 12 L7 9 L4 8 L2 6 Z" fill="#d8d8d8"/><path d="M7 9 L9 12 L11 11 L10 8Z" fill="#9a9a9a"/><circle cx="4.500" cy="5" r="1" fill="#e02020"/></svg><span class="abs" style="left:29px;top:6px;color:#fff;font-size:12px;letter-spacing:-.2px;white-space:nowrap;text-shadow:0 0 2px rgba(0,0,0,.45)">estuche03-9-4-def.3...</span></div>
<div class="abs" style="left:567px;top:1px;width:160px;height:29px;border:1px solid #4e627f;border-radius:3px;background:linear-gradient(#97aac6,#8a9fbd 45%,#8096b5 50%,#869bb9);box-shadow:inset 0 0 0 1px rgba(255,255,255,.35)"><svg style="left:8px;top:4px;width:17px;height:18px" viewBox="0 0 17 18"><rect x="1" y="2" width="14" height="15" rx="1" fill="#f4f6fa" stroke="#8a98b0" stroke-width=".8"/><path d="M3 14 Q5 8 12 3 Q14 2 14.500 3.500 Q10 9 5 15Z" fill="#3a9a3a"/><path d="M3 14 L5 15 L2.500 16.500Z" fill="#e8a020"/><path d="M9 5.500 Q12 3 14 3.500 L12 6Z" fill="#e04a2a"/></svg><span class="abs" style="left:29px;top:6px;color:#fff;font-size:12px;letter-spacing:-.2px;white-space:nowrap;text-shadow:0 0 2px rgba(0,0,0,.45)">Adobe Photoshop</span></div>
<svg style="left:7px;top:-5px;width:40px;height:40px" viewBox="0 0 40 40"><defs><radialGradient id="gorb" cx=".5" cy=".35" r=".7"><stop offset="0" stop-color="#9fd0f4"/><stop offset=".45" stop-color="#3f86c8"/><stop offset="1" stop-color="#123a74"/></radialGradient></defs><circle cx="20" cy="20" r="18.500" fill="url(#gorb)" stroke="#1c3458" stroke-width="1.200"/><circle cx="20" cy="20" r="17" fill="none" stroke="#b9dcf6" stroke-width="1" opacity=".7"/><g transform="translate(20 20.500) scale(1.28) translate(-18.300 -20.700)"><path d="M10.500 13.500 Q14.500 11 18.500 13 L17 20 Q13.500 18 9.500 20.500Z" fill="#e8582a"/><path d="M20.500 13.500 Q24.500 15.500 29 12.500 L27.500 19.500 Q23.500 22 19 20.500Z" fill="#7ec242"/><path d="M9 22.500 Q13 20 16.500 22 L15 28.500 Q11.500 27 7.500 29Z" fill="#3a9de0"/><path d="M18.500 22.500 Q22.500 24.500 27 21.500 L25.500 28.500 Q21.500 31 17 29Z" fill="#f8c21c"/></g><ellipse cx="20" cy="10" rx="13" ry="7" fill="#fff" opacity=".22"/></svg>
<svg style="left:74px;top:6px;width:16px;height:20px" viewBox="0 0 16 20"><path d="M2 2 H14 V16 L11 19 H2Z" fill="#a8d4ee" stroke="#5a8ab0" stroke-width=".8"/><path d="M4 6H12M4 9H12M4 12H12M4 15H9" stroke="#e6f3fb" stroke-width="1"/><path d="M3 1.500v2M5.500 1.500v2M8 1.500v2M10.500 1.500v2M13 1.500v2" stroke="#3a5a7a" stroke-width=".8"/></svg>
<svg style="left:120px;top:5px;width:16px;height:21px" viewBox="0 0 16 21"><path d="M2 1 H14 V16 H2Z" fill="#f4f8fc" stroke="#4a7ab8" stroke-width="1"/><text x="8" y="9" text-anchor="middle" font-size="8" font-weight="bold" fill="#d05a1a" font-family="Liberation Sans,sans-serif">A</text><path d="M4 11H12M4 13.500H12" stroke="#3a6ab0" stroke-width="1"/><path d="M1 16 H15 L13 20 H3Z" fill="#5a90d0" stroke="#2a5a9a" stroke-width=".6"/></svg>
<div class="abs" style="left:165px;top:8px;width:16px;height:14px;background:#000;border:1px solid #cfd6e0;border-top:3px solid #cfd6e0"></div><div class="abs" style="left:167px;top:12px;font-size:7px;color:#fff;font-weight:bold;letter-spacing:-.4px">C:\_</div>
<svg style="left:212px;top:5px;width:14px;height:21px" viewBox="0 0 14 21"><rect x="1" y="1" width="12" height="19" rx="1.500" fill="#b4d8f2" stroke="#5a92c4" stroke-width=".8"/><rect x="2.500" y="3" width="9" height="4" fill="#eef8ff" stroke="#6a9ac4" stroke-width=".5"/><path d="M3 10h2v2h-2zM6 10h2v2h-2zM9 10h2v2h-2zM3 13h2v2h-2zM6 13h2v2h-2zM9 13h2v2h-2zM3 16h2v2h-2zM6 16h2v2h-2zM9 16h2v2h-2z" fill="#e8944a"/></svg>
<svg style="left:765px;top:13px;width:9px;height:6px" viewBox="0 0 9 6"><path d="M0 6L4.500 0L9 6Z" fill="#fff"/></svg>
<svg style="left:786px;top:8px;width:14px;height:16px" viewBox="0 0 16 19"><path d="M2 1V18" stroke="#fff" stroke-width="1.800"/><path d="M3.500 2 Q6.500 0 9 2 T14.500 2 V10 Q12 12 9 10 T3.500 10Z" fill="none" stroke="#fff" stroke-width="1.500"/></svg>
<svg style="left:810px;top:10px;width:15px;height:12px" viewBox="0 0 16 15"><path d="M1 14v-2M4 14v-5M7 14v-7.500M10 14v-10M13 14v-13" stroke="#fff" stroke-width="2"/><path d="M0 14.500H15" stroke="#fff" stroke-width="1"/></svg>
<svg style="left:834px;top:8px;width:16px;height:17px" viewBox="0 0 16 17"><path d="M1 6H4L8 2V15L4 11H1Z" fill="#fff"/><path d="M10 5.500Q12 8.500 10 11.500M12 3.500Q15.500 8.500 12 13.500" fill="none" stroke="#fff" stroke-width="1.200"/></svg>
<svg style="left:859px;top:7px;width:14px;height:19px" viewBox="0 0 16 21"><rect x="1" y="2" width="9" height="17" rx="1" fill="none" stroke="#fff" stroke-width="1.600"/><path d="M4 .5v2M7 .5v2" stroke="#fff" stroke-width="1.200"/><path d="M9 6 H14 V9 H12 V12 Q12 15 9 15 V18" fill="#fff" stroke="#fff" stroke-width="1"/><rect x="9" y="5" width="4" height="8" fill="#fff"/></svg>
<svg style="left:882px;top:8px;width:17px;height:17px" viewBox="0 0 17 17"><circle cx="8.500" cy="8.500" r="8" fill="#f4dc2a" stroke="#a08a10" stroke-width=".6"/><path d="M8.500 3.500V13.500M3.500 8.500H13.500" stroke="#1c9a2a" stroke-width="3.400"/></svg>
<svg style="left:907px;top:7px;width:16px;height:18px" viewBox="0 0 16 18"><rect x=".5" y=".5" width="14" height="14" fill="#1c48c0" stroke="#e8f0ff" stroke-width="1"/><path d="M7.500 3V12M3 7.500H12M4.500 4.500L10.500 10.500M10.500 4.500L4.500 10.500" stroke="#cfe0ff" stroke-width=".9"/><path d="M0 15.500H15V17.500H0Z" fill="#e8eef8"/></svg>
<div class="abs" style="left:955px;top:9px;color:#fff;font-size:12px;letter-spacing:-.35px">15:15</div>
<div class="abs" style="left:1009px;top:1px;width:15px;height:30px;border:1px solid #50627e;border-right:none;background:linear-gradient(90deg,#95a5bd,#6f819d 35%,#62748f);box-shadow:inset 1px 0 0 rgba(255,255,255,.35)"></div>
</div>
</body></html>
